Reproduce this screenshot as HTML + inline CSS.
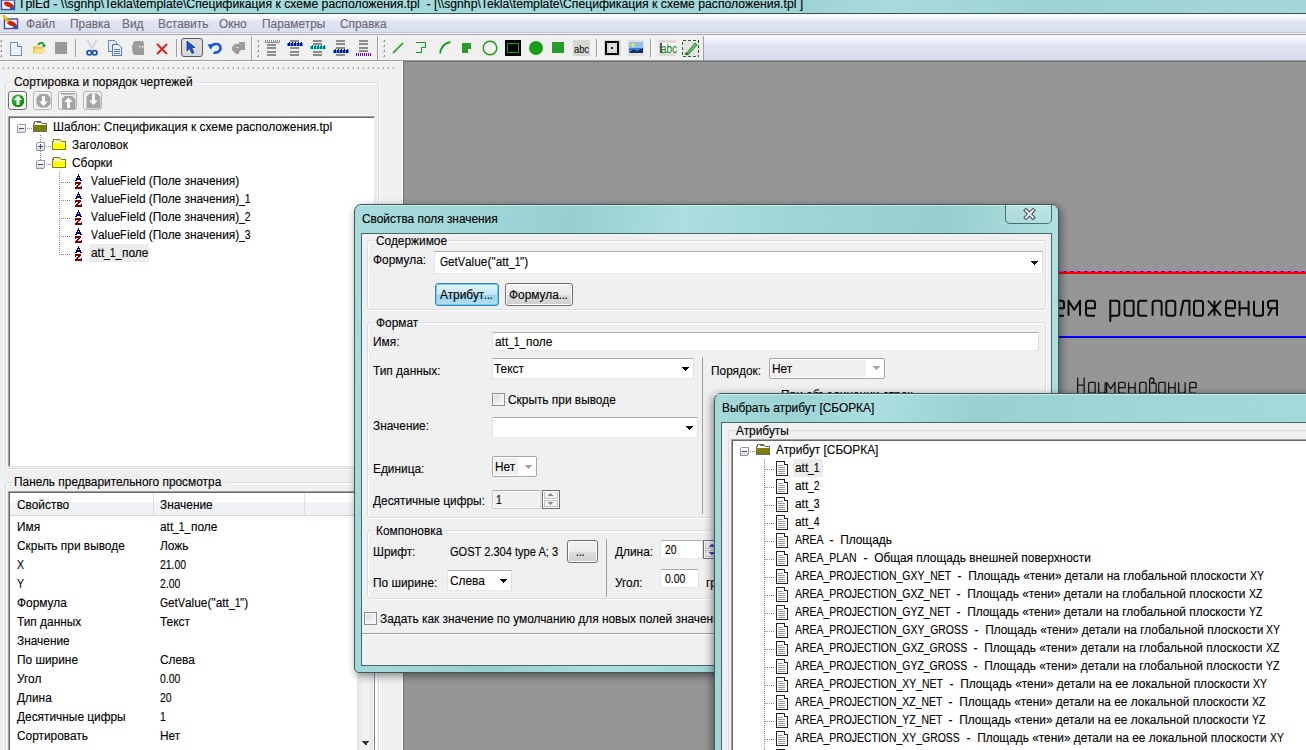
<!DOCTYPE html><html><head><meta charset="utf-8"><style>
html,body{margin:0;padding:0;}
body{width:1306px;height:750px;overflow:hidden;position:relative;background:#f0f0f0;font-family:"Liberation Sans",sans-serif;}
.t{position:absolute;white-space:pre;font-family:"Liberation Sans",sans-serif;-webkit-text-stroke:0.12px currentColor;}
svg{overflow:visible}
</style></head><body>
<div style="position:absolute;left:0px;top:0px;width:1306px;height:13px;background:linear-gradient(90deg,#a6dbdc 0%,#a3d9da 50%,#9fd3d4 62%,#a8dcdc 68%,#9dd2d3 80%,#a3d7d8 100%);"></div>
<div style="position:absolute;left:0px;top:13px;width:1306px;height:1px;background:#3a5555;"></div>
<div class="t" style="left:18px;top:-2px;font-size:12px;line-height:12px;color:#000;transform:scaleX(1.0175);transform-origin:0 0;">TplEd - \\sgnhp\Tekla\template\Спецификация к схеме расположения.tpl  - [\\sgnhp\Tekla\template\Спецификация к схеме расположения.tpl ]</div>
<svg style="position:absolute;left:0px;top:-4px;" width="17" height="16" viewBox="0 0 17 16"><rect x="1.5" y="4" width="13" height="9.5" fill="#fff" stroke="#4848a0" stroke-width="1.4"/><rect x="10" y="9.5" width="4" height="3.5" fill="#1060e0"/><ellipse cx="8.5" cy="8.5" rx="4.8" ry="2.4" transform="rotate(22 8.5 8.5)" fill="#d82010"/></svg>
<div style="position:absolute;left:0px;top:14px;width:1306px;height:18px;background:linear-gradient(180deg,#fbfcfe 0%,#f6f7fb 20%,#dfe4f1 45%,#d9dfee 100%);"></div>
<div style="position:absolute;left:0px;top:32px;width:1306px;height:1px;background:#c4c8d6;"></div>
<div style="position:absolute;left:0px;top:33px;width:1306px;height:1px;background:#f4f5f9;"></div>
<svg style="position:absolute;left:3px;top:15px;" width="17" height="16" viewBox="0 0 17 16"><rect x="1.5" y="4" width="13" height="9.5" fill="#fff" stroke="#4848a0" stroke-width="1.4"/><rect x="10" y="9.5" width="4" height="3.5" fill="#1060e0"/><ellipse cx="8.5" cy="8.5" rx="4.8" ry="2.4" transform="rotate(22 8.5 8.5)" fill="#d82010"/><path d="M0.8 1 L4.5 6.5" stroke="#e8c000" stroke-width="2.6" stroke-linecap="round"/></svg>
<div class="t" style="left:26.00px;top:18px;font-size:12px;line-height:12px;color:#6d6873;transform:scaleX(0.99);transform-origin:0 0;">Файл</div>
<div class="t" style="left:70.00px;top:18px;font-size:12px;line-height:12px;color:#6d6873;transform:scaleX(0.99);transform-origin:0 0;">Правка</div>
<div class="t" style="left:122.00px;top:18px;font-size:12px;line-height:12px;color:#6d6873;transform:scaleX(0.99);transform-origin:0 0;">Вид</div>
<div class="t" style="left:158.00px;top:18px;font-size:12px;line-height:12px;color:#6d6873;transform:scaleX(0.99);transform-origin:0 0;">Вставить</div>
<div class="t" style="left:219.00px;top:18px;font-size:12px;line-height:12px;color:#6d6873;transform:scaleX(0.99);transform-origin:0 0;">Окно</div>
<div class="t" style="left:262.00px;top:18px;font-size:12px;line-height:12px;color:#6d6873;transform:scaleX(0.99);transform-origin:0 0;">Параметры</div>
<div class="t" style="left:340.00px;top:18px;font-size:12px;line-height:12px;color:#6d6873;transform:scaleX(0.99);transform-origin:0 0;">Справка</div>
<div style="position:absolute;left:0px;top:34px;width:1306px;height:26px;background:linear-gradient(180deg,#fcfcfe 0%,#f6f7fb 15%,#dfe3f1 45%,#d6dbec 100%);"></div>
<div style="position:absolute;left:0px;top:34px;width:1306px;height:1px;background:#a4a4a8;"></div>
<div style="position:absolute;left:0px;top:60px;width:1306px;height:1px;background:#a0a0a0;"></div>
<div style="position:absolute;left:0px;top:35px;width:251px;height:25px;background:#f0f0f0;"></div>
<div style="position:absolute;left:253px;top:35px;width:124px;height:25px;background:#f0f0f0;"></div>
<div style="position:absolute;left:379px;top:35px;width:324px;height:25px;background:#f0f0f0;"></div>
<div style="position:absolute;left:251px;top:36px;width:1px;height:24px;background:#a0a0a0;"></div>
<div style="position:absolute;left:252px;top:36px;width:1px;height:24px;background:#ffffff;"></div>
<div style="position:absolute;left:377px;top:36px;width:1px;height:24px;background:#a0a0a0;"></div>
<div style="position:absolute;left:378px;top:36px;width:1px;height:24px;background:#ffffff;"></div>
<div style="position:absolute;left:703px;top:36px;width:1px;height:24px;background:#a0a0a0;"></div>
<svg style="position:absolute;left:0px;top:40px;" width="2" height="2" viewBox="0 0 2 2" shape-rendering="crispEdges"><rect x="1" y="0" width="1" height="2" fill="#909090"/><rect x="0" y="1" width="1" height="1" fill="#b0b0b0"/></svg>
<svg style="position:absolute;left:0px;top:45px;" width="2" height="2" viewBox="0 0 2 2" shape-rendering="crispEdges"><rect x="1" y="0" width="1" height="2" fill="#909090"/><rect x="0" y="1" width="1" height="1" fill="#b0b0b0"/></svg>
<svg style="position:absolute;left:0px;top:50px;" width="2" height="2" viewBox="0 0 2 2" shape-rendering="crispEdges"><rect x="1" y="0" width="1" height="2" fill="#909090"/><rect x="0" y="1" width="1" height="1" fill="#b0b0b0"/></svg>
<svg style="position:absolute;left:0px;top:55px;" width="2" height="2" viewBox="0 0 2 2" shape-rendering="crispEdges"><rect x="1" y="0" width="1" height="2" fill="#909090"/><rect x="0" y="1" width="1" height="1" fill="#b0b0b0"/></svg>
<svg style="position:absolute;left:257px;top:40px;" width="2" height="2" viewBox="0 0 2 2" shape-rendering="crispEdges"><rect x="1" y="0" width="1" height="2" fill="#909090"/><rect x="0" y="1" width="1" height="1" fill="#b0b0b0"/></svg>
<svg style="position:absolute;left:257px;top:45px;" width="2" height="2" viewBox="0 0 2 2" shape-rendering="crispEdges"><rect x="1" y="0" width="1" height="2" fill="#909090"/><rect x="0" y="1" width="1" height="1" fill="#b0b0b0"/></svg>
<svg style="position:absolute;left:257px;top:50px;" width="2" height="2" viewBox="0 0 2 2" shape-rendering="crispEdges"><rect x="1" y="0" width="1" height="2" fill="#909090"/><rect x="0" y="1" width="1" height="1" fill="#b0b0b0"/></svg>
<svg style="position:absolute;left:257px;top:55px;" width="2" height="2" viewBox="0 0 2 2" shape-rendering="crispEdges"><rect x="1" y="0" width="1" height="2" fill="#909090"/><rect x="0" y="1" width="1" height="1" fill="#b0b0b0"/></svg>
<svg style="position:absolute;left:383px;top:40px;" width="2" height="2" viewBox="0 0 2 2" shape-rendering="crispEdges"><rect x="1" y="0" width="1" height="2" fill="#909090"/><rect x="0" y="1" width="1" height="1" fill="#b0b0b0"/></svg>
<svg style="position:absolute;left:383px;top:45px;" width="2" height="2" viewBox="0 0 2 2" shape-rendering="crispEdges"><rect x="1" y="0" width="1" height="2" fill="#909090"/><rect x="0" y="1" width="1" height="1" fill="#b0b0b0"/></svg>
<svg style="position:absolute;left:383px;top:50px;" width="2" height="2" viewBox="0 0 2 2" shape-rendering="crispEdges"><rect x="1" y="0" width="1" height="2" fill="#909090"/><rect x="0" y="1" width="1" height="1" fill="#b0b0b0"/></svg>
<svg style="position:absolute;left:383px;top:55px;" width="2" height="2" viewBox="0 0 2 2" shape-rendering="crispEdges"><rect x="1" y="0" width="1" height="2" fill="#909090"/><rect x="0" y="1" width="1" height="1" fill="#b0b0b0"/></svg>
<div style="position:absolute;left:75px;top:39px;width:1px;height:18px;background:#9a9a9a;"></div>
<div style="position:absolute;left:76px;top:39px;width:1px;height:18px;background:#ffffff;"></div>
<div style="position:absolute;left:176px;top:39px;width:1px;height:18px;background:#9a9a9a;"></div>
<div style="position:absolute;left:177px;top:39px;width:1px;height:18px;background:#ffffff;"></div>
<div style="position:absolute;left:596px;top:39px;width:1px;height:18px;background:#9a9a9a;"></div>
<div style="position:absolute;left:597px;top:39px;width:1px;height:18px;background:#ffffff;"></div>
<div style="position:absolute;left:650px;top:39px;width:1px;height:18px;background:#9a9a9a;"></div>
<div style="position:absolute;left:651px;top:39px;width:1px;height:18px;background:#ffffff;"></div>
<svg style="position:absolute;left:10px;top:42px;" width="12" height="14" viewBox="0 0 12 14" shape-rendering="crispEdges"><path d="M0.5 0.5 H7.5 L11.5 4.5 V13.5 H0.5Z" fill="#e8f0fc" stroke="#7a8cb4"/><path d="M7.5 0.5 V4.5 H11.5" fill="#c8d8f0" stroke="#7a8cb4"/></svg>
<svg style="position:absolute;left:32px;top:41px;" width="15" height="14" viewBox="0 0 15 14"><path d="M1 5 H5 L6 6 H11 V13 H1Z" fill="#e9c55a"/><path d="M1 13 L4 8 H14 L11 13Z" fill="#f7df8c"/><path d="M6 4 C8 1 11 1 12 4" stroke="#20a020" stroke-width="2" fill="none"/><path d="M10 4 H14 L12 7Z" fill="#20a020"/></svg>
<svg style="position:absolute;left:55px;top:42px;" width="12" height="12" viewBox="0 0 12 12" shape-rendering="crispEdges"><rect x="0" y="0" width="12" height="12" rx="1" fill="#9a9a9a"/></svg>
<svg style="position:absolute;left:86px;top:40px;" width="12" height="16" viewBox="0 0 12 16"><path d="M1.5 0 L7 10.5 M10.5 0 L5 10.5" stroke="#b0b8c8" stroke-width="1.6"/><path d="M1.5 0 L7 10.5 M10.5 0 L5 10.5" stroke="#fff" stroke-width="0.6"/><ellipse cx="3.3" cy="12.8" rx="2.3" ry="2.2" fill="none" stroke="#1e50c0" stroke-width="1.7"/><ellipse cx="8.7" cy="12.8" rx="2.3" ry="2.2" fill="none" stroke="#1e50c0" stroke-width="1.7"/></svg>
<svg style="position:absolute;left:108px;top:40px;" width="14" height="16" viewBox="0 0 14 16" shape-rendering="crispEdges"><path d="M0.5 0.5 H6.5 L8.5 2.5 V11.5 H0.5Z" fill="#e4ecf8" stroke="#6a86c0"/><path d="M4.5 4.5 H10.5 L13.5 7.5 V15.5 H4.5Z" fill="#eef3fb" stroke="#5577bb"/><path d="M6 9.5H12M6 11.5H12M6 13.5H12" stroke="#5577bb"/></svg>
<svg style="position:absolute;left:131px;top:40px;" width="14" height="16" viewBox="0 0 14 16"><path d="M2 4 Q2 1 5 1 H10 Q13 1 13 4 V15 H4 Q2 15 1.5 12 L1 6Z" fill="#9c9c9c"/><rect x="8" y="6" width="1.5" height="1.5" fill="#fff"/><rect x="11" y="6" width="1.5" height="1.5" fill="#fff"/></svg>
<svg style="position:absolute;left:156px;top:43px;" width="12" height="12" viewBox="0 0 12 12"><path d="M1 1 L11 11 M11 1 L1 11" stroke="#e02010" stroke-width="1.8"/></svg>
<div style="position:absolute;left:181px;top:38px;width:22px;height:19px;border:1px solid #5a5a5a;border-radius:3px;background:linear-gradient(180deg,#e0e0e0,#d6d6d6);box-sizing:border-box;"></div>
<svg style="position:absolute;left:186px;top:41px;" width="12" height="14" viewBox="0 0 12 14"><path d="M1 0 L1 10 L3.5 7.5 L6 12.5 L8 11.5 L5.5 6.5 L9 6.5Z" fill="#1a4fd0" stroke="#0d2f80" stroke-width="0.7"/></svg>
<svg style="position:absolute;left:207px;top:41px;" width="16" height="14" viewBox="0 0 16 14"><path d="M3.5 6.5 C5 2 13 1.5 13.5 6.5 C14 10.5 9 12.5 6.5 11.5" stroke="#1858d0" stroke-width="2.6" fill="none"/><path d="M0.5 3.5 L6 3 L4 9Z" fill="#1858d0"/></svg>
<svg style="position:absolute;left:230px;top:41px;" width="16" height="14" viewBox="0 0 16 14"><path d="M9 1 H15 V9 H11 L9 11 V13 H6 L2 9 V6 L5 3 H9Z" fill="#9c9c9c"/><path d="M5 7 H9 L8 6Z" fill="#fff"/></svg>
<svg style="position:absolute;left:265px;top:39px;" width="16" height="18" viewBox="0 0 16 18" shape-rendering="crispEdges"><rect x="0" y="3" width="14" height="1" fill="#8c8c8c"/><rect x="0" y="1" width="1" height="2" fill="#8c8c8c"/><rect x="2" y="1" width="1" height="2" fill="#8c8c8c"/><rect x="4" y="1" width="1" height="2" fill="#8c8c8c"/><rect x="6" y="1" width="1" height="2" fill="#8c8c8c"/><rect x="8" y="1" width="1" height="2" fill="#8c8c8c"/><rect x="10" y="1" width="1" height="2" fill="#8c8c8c"/><rect x="12" y="1" width="1" height="2" fill="#8c8c8c"/><rect x="14" y="1" width="1" height="2" fill="#8c8c8c"/><rect x="2" y="5" width="9" height="2" fill="#8c8c8c"/><rect x="2" y="8" width="9" height="2" fill="#8c8c8c"/><rect x="2" y="12" width="9" height="2" fill="#8c8c8c"/><rect x="2" y="15" width="9" height="2" fill="#8c8c8c"/></svg>
<svg style="position:absolute;left:287px;top:39px;" width="16" height="18" viewBox="0 0 16 18" shape-rendering="crispEdges"><rect x="3" y="1" width="9" height="2" fill="#8c8c8c"/><rect x="3" y="8" width="9" height="2" fill="#8c8c8c"/><rect x="3" y="12" width="9" height="2" fill="#8c8c8c"/><rect x="3" y="15" width="9" height="2" fill="#8c8c8c"/><rect x="0" y="4" width="16" height="3" fill="#10b8ff"/><rect x="1" y="4" width="2" height="3" fill="#000090"/><rect x="1.5" y="3" width="1" height="1" fill="#000090"/><rect x="4" y="4" width="2" height="3" fill="#000090"/><rect x="4.5" y="3" width="1" height="1" fill="#000090"/><rect x="7" y="4" width="2" height="3" fill="#000090"/><rect x="7.5" y="3" width="1" height="1" fill="#000090"/><rect x="10" y="4" width="2" height="3" fill="#000090"/><rect x="10.5" y="3" width="1" height="1" fill="#000090"/><rect x="13" y="4" width="2" height="3" fill="#000090"/><rect x="13.5" y="3" width="1" height="1" fill="#000090"/></svg>
<svg style="position:absolute;left:310px;top:39px;" width="16" height="18" viewBox="0 0 16 18" shape-rendering="crispEdges"><rect x="3" y="1" width="9" height="2" fill="#8c8c8c"/><rect x="3" y="4" width="9" height="2" fill="#8c8c8c"/><rect x="3" y="12" width="9" height="2" fill="#8c8c8c"/><rect x="3" y="15" width="9" height="2" fill="#8c8c8c"/><rect x="0" y="7" width="16" height="3" fill="#00ffff"/><rect x="1" y="7" width="2" height="3" fill="#007070"/><rect x="1.5" y="6" width="1" height="1" fill="#007070"/><rect x="4" y="7" width="2" height="3" fill="#007070"/><rect x="4.5" y="6" width="1" height="1" fill="#007070"/><rect x="7" y="7" width="2" height="3" fill="#007070"/><rect x="7.5" y="6" width="1" height="1" fill="#007070"/><rect x="10" y="7" width="2" height="3" fill="#007070"/><rect x="10.5" y="6" width="1" height="1" fill="#007070"/><rect x="13" y="7" width="2" height="3" fill="#007070"/><rect x="13.5" y="6" width="1" height="1" fill="#007070"/></svg>
<svg style="position:absolute;left:333px;top:39px;" width="16" height="18" viewBox="0 0 16 18" shape-rendering="crispEdges"><rect x="3" y="1" width="9" height="2" fill="#8c8c8c"/><rect x="3" y="4" width="9" height="2" fill="#8c8c8c"/><rect x="3" y="8" width="9" height="2" fill="#8c8c8c"/><rect x="3" y="15" width="9" height="2" fill="#8c8c8c"/><rect x="0" y="11" width="16" height="3" fill="#10b8ff"/><rect x="1" y="11" width="2" height="3" fill="#000090"/><rect x="1.5" y="10" width="1" height="1" fill="#000090"/><rect x="4" y="11" width="2" height="3" fill="#000090"/><rect x="4.5" y="10" width="1" height="1" fill="#000090"/><rect x="7" y="11" width="2" height="3" fill="#000090"/><rect x="7.5" y="10" width="1" height="1" fill="#000090"/><rect x="10" y="11" width="2" height="3" fill="#000090"/><rect x="10.5" y="10" width="1" height="1" fill="#000090"/><rect x="13" y="11" width="2" height="3" fill="#000090"/><rect x="13.5" y="10" width="1" height="1" fill="#000090"/></svg>
<svg style="position:absolute;left:356px;top:39px;" width="16" height="18" viewBox="0 0 16 18" shape-rendering="crispEdges"><rect x="3" y="1" width="9" height="2" fill="#8c8c8c"/><rect x="3" y="4" width="9" height="2" fill="#8c8c8c"/><rect x="3" y="8" width="9" height="2" fill="#8c8c8c"/><rect x="3" y="11" width="9" height="2" fill="#8c8c8c"/><rect x="0" y="14" width="1" height="3" fill="#7000e0"/><rect x="2" y="14" width="1" height="3" fill="#7000e0"/><rect x="4" y="14" width="1" height="3" fill="#7000e0"/><rect x="6" y="14" width="1" height="3" fill="#7000e0"/><rect x="8" y="14" width="1" height="3" fill="#7000e0"/><rect x="10" y="14" width="1" height="3" fill="#7000e0"/><rect x="12" y="14" width="1" height="3" fill="#7000e0"/><rect x="14" y="14" width="1" height="3" fill="#7000e0"/></svg>
<svg style="position:absolute;left:392px;top:42px;" width="12" height="12" viewBox="0 0 12 12"><path d="M1 11 L11 1" stroke="#17a017" stroke-width="1.6"/></svg>
<svg style="position:absolute;left:416px;top:42px;" width="10" height="11" viewBox="0 0 10 11" shape-rendering="crispEdges"><path d="M0 0.5 H9.5 V5.5 H5.5 V10.5 H0" stroke="#17a017" fill="none"/></svg>
<svg style="position:absolute;left:439px;top:41px;" width="12" height="13" viewBox="0 0 12 13"><path d="M1 12.5 C2 6 6 2 11.5 1" stroke="#17a017" stroke-width="1.8" fill="none"/></svg>
<svg style="position:absolute;left:462px;top:43px;" width="10" height="10" viewBox="0 0 10 10" shape-rendering="crispEdges"><path d="M0 0 H9 V6 H6 V10 H0Z" fill="#2a9a2a"/></svg>
<svg style="position:absolute;left:482px;top:40px;" width="16" height="16" viewBox="0 0 16 16"><circle cx="8" cy="8" r="6.8" fill="none" stroke="#17a017" stroke-width="1.4"/></svg>
<svg style="position:absolute;left:505px;top:40px;" width="16" height="16" viewBox="0 0 16 16" shape-rendering="crispEdges"><rect x="0" y="0" width="16" height="16" fill="#000"/><rect x="2.5" y="3.5" width="11" height="9" fill="none" stroke="#17a017"/></svg>
<svg style="position:absolute;left:528px;top:40px;" width="16" height="16" viewBox="0 0 16 16"><circle cx="8" cy="8" r="7" fill="#17a017"/></svg>
<svg style="position:absolute;left:552px;top:42px;" width="12" height="11" viewBox="0 0 12 11" shape-rendering="crispEdges"><rect x="0" y="0" width="12" height="11" fill="#2a9a2a"/></svg>
<div style="position:absolute;left:573px;top:40px;width:17px;height:16px;background:#d8d6d0;"></div>
<div class="t" style="left:574px;top:44px;font-size:11px;line-height:11px;color:#111;transform:scaleX(0.8451);transform-origin:0 0;">abc</div>
<svg style="position:absolute;left:604px;top:40px;" width="17" height="16" viewBox="0 0 17 16" shape-rendering="crispEdges"><rect x="0" y="0" width="17" height="16" fill="#dcdad4"/><rect x="2" y="2" width="12" height="12" fill="none" stroke="#000" stroke-width="1.5"/><circle cx="8" cy="8" r="1.5" fill="#222"/></svg>
<svg style="position:absolute;left:628px;top:40px;" width="16" height="16" viewBox="0 0 16 16" shape-rendering="crispEdges"><rect x="0" y="0" width="16" height="16" fill="#e0e0e0"/><rect x="1" y="2" width="14" height="11" fill="#3a7ad0"/><rect x="1" y="2" width="14" height="6" fill="#8ec0f0"/><circle cx="5" cy="5" r="1.8" fill="#f8e040"/><path d="M1 13 L5 9 L9 11 L15 8 V13Z" fill="#103060"/></svg>
<svg style="position:absolute;left:659px;top:40px;" width="17" height="16" viewBox="0 0 17 16" shape-rendering="crispEdges"><rect x="0" y="0" width="17" height="16" fill="#dcdad4"/><rect x="1" y="3" width="16" height="10" fill="#fff"/><rect x="1" y="3" width="2" height="10" fill="#555"/></svg>
<div class="t" style="left:661px;top:43px;font-size:12px;line-height:12px;color:#1a7a1a;transform:scaleX(0.8271);transform-origin:0 0;clip-path:inset(0 0 0 0);">abc</div>
<svg style="position:absolute;left:682px;top:40px;" width="17" height="17" viewBox="0 0 17 17" shape-rendering="crispEdges"><rect x="0.5" y="0.5" width="16" height="16" fill="#e4e4e4" stroke="#1a6a1a" stroke-dasharray="3 2"/></svg>
<svg style="position:absolute;left:682px;top:40px;" width="17" height="17" viewBox="0 0 17 17"><path d="M4 14 L13 3 L15 5 L6 15Z" fill="#5ac85a" stroke="#1a6a1a" stroke-width="0.8"/><path d="M3 15 L4 12 L6 14Z" fill="#333"/></svg>
<div style="position:absolute;left:0px;top:61px;width:403px;height:689px;background:#f0f0f0;"></div>
<div style="position:absolute;left:0px;top:61px;width:403px;height:1px;background:#ffffff;"></div>
<div style="position:absolute;left:402px;top:61px;width:1px;height:689px;background:#ffffff;"></div>
<svg style="position:absolute;left:2px;top:67px;" width="2" height="2" viewBox="0 0 2 2" shape-rendering="crispEdges"><rect x="1" y="0" width="1" height="2" fill="#a8a8a8"/><rect x="0" y="1" width="1" height="1" fill="#c8c8c8"/></svg>
<svg style="position:absolute;left:7px;top:67px;" width="2" height="2" viewBox="0 0 2 2" shape-rendering="crispEdges"><rect x="1" y="0" width="1" height="2" fill="#a8a8a8"/><rect x="0" y="1" width="1" height="1" fill="#c8c8c8"/></svg>
<svg style="position:absolute;left:12px;top:67px;" width="2" height="2" viewBox="0 0 2 2" shape-rendering="crispEdges"><rect x="1" y="0" width="1" height="2" fill="#a8a8a8"/><rect x="0" y="1" width="1" height="1" fill="#c8c8c8"/></svg>
<svg style="position:absolute;left:17px;top:67px;" width="2" height="2" viewBox="0 0 2 2" shape-rendering="crispEdges"><rect x="1" y="0" width="1" height="2" fill="#a8a8a8"/><rect x="0" y="1" width="1" height="1" fill="#c8c8c8"/></svg>
<svg style="position:absolute;left:22px;top:67px;" width="2" height="2" viewBox="0 0 2 2" shape-rendering="crispEdges"><rect x="1" y="0" width="1" height="2" fill="#a8a8a8"/><rect x="0" y="1" width="1" height="1" fill="#c8c8c8"/></svg>
<svg style="position:absolute;left:27px;top:67px;" width="2" height="2" viewBox="0 0 2 2" shape-rendering="crispEdges"><rect x="1" y="0" width="1" height="2" fill="#a8a8a8"/><rect x="0" y="1" width="1" height="1" fill="#c8c8c8"/></svg>
<svg style="position:absolute;left:32px;top:67px;" width="2" height="2" viewBox="0 0 2 2" shape-rendering="crispEdges"><rect x="1" y="0" width="1" height="2" fill="#a8a8a8"/><rect x="0" y="1" width="1" height="1" fill="#c8c8c8"/></svg>
<svg style="position:absolute;left:37px;top:67px;" width="2" height="2" viewBox="0 0 2 2" shape-rendering="crispEdges"><rect x="1" y="0" width="1" height="2" fill="#a8a8a8"/><rect x="0" y="1" width="1" height="1" fill="#c8c8c8"/></svg>
<svg style="position:absolute;left:42px;top:67px;" width="2" height="2" viewBox="0 0 2 2" shape-rendering="crispEdges"><rect x="1" y="0" width="1" height="2" fill="#a8a8a8"/><rect x="0" y="1" width="1" height="1" fill="#c8c8c8"/></svg>
<svg style="position:absolute;left:47px;top:67px;" width="2" height="2" viewBox="0 0 2 2" shape-rendering="crispEdges"><rect x="1" y="0" width="1" height="2" fill="#a8a8a8"/><rect x="0" y="1" width="1" height="1" fill="#c8c8c8"/></svg>
<svg style="position:absolute;left:52px;top:67px;" width="2" height="2" viewBox="0 0 2 2" shape-rendering="crispEdges"><rect x="1" y="0" width="1" height="2" fill="#a8a8a8"/><rect x="0" y="1" width="1" height="1" fill="#c8c8c8"/></svg>
<svg style="position:absolute;left:57px;top:67px;" width="2" height="2" viewBox="0 0 2 2" shape-rendering="crispEdges"><rect x="1" y="0" width="1" height="2" fill="#a8a8a8"/><rect x="0" y="1" width="1" height="1" fill="#c8c8c8"/></svg>
<svg style="position:absolute;left:62px;top:67px;" width="2" height="2" viewBox="0 0 2 2" shape-rendering="crispEdges"><rect x="1" y="0" width="1" height="2" fill="#a8a8a8"/><rect x="0" y="1" width="1" height="1" fill="#c8c8c8"/></svg>
<svg style="position:absolute;left:67px;top:67px;" width="2" height="2" viewBox="0 0 2 2" shape-rendering="crispEdges"><rect x="1" y="0" width="1" height="2" fill="#a8a8a8"/><rect x="0" y="1" width="1" height="1" fill="#c8c8c8"/></svg>
<svg style="position:absolute;left:72px;top:67px;" width="2" height="2" viewBox="0 0 2 2" shape-rendering="crispEdges"><rect x="1" y="0" width="1" height="2" fill="#a8a8a8"/><rect x="0" y="1" width="1" height="1" fill="#c8c8c8"/></svg>
<svg style="position:absolute;left:77px;top:67px;" width="2" height="2" viewBox="0 0 2 2" shape-rendering="crispEdges"><rect x="1" y="0" width="1" height="2" fill="#a8a8a8"/><rect x="0" y="1" width="1" height="1" fill="#c8c8c8"/></svg>
<svg style="position:absolute;left:82px;top:67px;" width="2" height="2" viewBox="0 0 2 2" shape-rendering="crispEdges"><rect x="1" y="0" width="1" height="2" fill="#a8a8a8"/><rect x="0" y="1" width="1" height="1" fill="#c8c8c8"/></svg>
<svg style="position:absolute;left:87px;top:67px;" width="2" height="2" viewBox="0 0 2 2" shape-rendering="crispEdges"><rect x="1" y="0" width="1" height="2" fill="#a8a8a8"/><rect x="0" y="1" width="1" height="1" fill="#c8c8c8"/></svg>
<svg style="position:absolute;left:92px;top:67px;" width="2" height="2" viewBox="0 0 2 2" shape-rendering="crispEdges"><rect x="1" y="0" width="1" height="2" fill="#a8a8a8"/><rect x="0" y="1" width="1" height="1" fill="#c8c8c8"/></svg>
<svg style="position:absolute;left:97px;top:67px;" width="2" height="2" viewBox="0 0 2 2" shape-rendering="crispEdges"><rect x="1" y="0" width="1" height="2" fill="#a8a8a8"/><rect x="0" y="1" width="1" height="1" fill="#c8c8c8"/></svg>
<svg style="position:absolute;left:102px;top:67px;" width="2" height="2" viewBox="0 0 2 2" shape-rendering="crispEdges"><rect x="1" y="0" width="1" height="2" fill="#a8a8a8"/><rect x="0" y="1" width="1" height="1" fill="#c8c8c8"/></svg>
<svg style="position:absolute;left:107px;top:67px;" width="2" height="2" viewBox="0 0 2 2" shape-rendering="crispEdges"><rect x="1" y="0" width="1" height="2" fill="#a8a8a8"/><rect x="0" y="1" width="1" height="1" fill="#c8c8c8"/></svg>
<svg style="position:absolute;left:112px;top:67px;" width="2" height="2" viewBox="0 0 2 2" shape-rendering="crispEdges"><rect x="1" y="0" width="1" height="2" fill="#a8a8a8"/><rect x="0" y="1" width="1" height="1" fill="#c8c8c8"/></svg>
<svg style="position:absolute;left:117px;top:67px;" width="2" height="2" viewBox="0 0 2 2" shape-rendering="crispEdges"><rect x="1" y="0" width="1" height="2" fill="#a8a8a8"/><rect x="0" y="1" width="1" height="1" fill="#c8c8c8"/></svg>
<svg style="position:absolute;left:122px;top:67px;" width="2" height="2" viewBox="0 0 2 2" shape-rendering="crispEdges"><rect x="1" y="0" width="1" height="2" fill="#a8a8a8"/><rect x="0" y="1" width="1" height="1" fill="#c8c8c8"/></svg>
<svg style="position:absolute;left:127px;top:67px;" width="2" height="2" viewBox="0 0 2 2" shape-rendering="crispEdges"><rect x="1" y="0" width="1" height="2" fill="#a8a8a8"/><rect x="0" y="1" width="1" height="1" fill="#c8c8c8"/></svg>
<svg style="position:absolute;left:132px;top:67px;" width="2" height="2" viewBox="0 0 2 2" shape-rendering="crispEdges"><rect x="1" y="0" width="1" height="2" fill="#a8a8a8"/><rect x="0" y="1" width="1" height="1" fill="#c8c8c8"/></svg>
<svg style="position:absolute;left:137px;top:67px;" width="2" height="2" viewBox="0 0 2 2" shape-rendering="crispEdges"><rect x="1" y="0" width="1" height="2" fill="#a8a8a8"/><rect x="0" y="1" width="1" height="1" fill="#c8c8c8"/></svg>
<svg style="position:absolute;left:142px;top:67px;" width="2" height="2" viewBox="0 0 2 2" shape-rendering="crispEdges"><rect x="1" y="0" width="1" height="2" fill="#a8a8a8"/><rect x="0" y="1" width="1" height="1" fill="#c8c8c8"/></svg>
<svg style="position:absolute;left:147px;top:67px;" width="2" height="2" viewBox="0 0 2 2" shape-rendering="crispEdges"><rect x="1" y="0" width="1" height="2" fill="#a8a8a8"/><rect x="0" y="1" width="1" height="1" fill="#c8c8c8"/></svg>
<svg style="position:absolute;left:152px;top:67px;" width="2" height="2" viewBox="0 0 2 2" shape-rendering="crispEdges"><rect x="1" y="0" width="1" height="2" fill="#a8a8a8"/><rect x="0" y="1" width="1" height="1" fill="#c8c8c8"/></svg>
<svg style="position:absolute;left:157px;top:67px;" width="2" height="2" viewBox="0 0 2 2" shape-rendering="crispEdges"><rect x="1" y="0" width="1" height="2" fill="#a8a8a8"/><rect x="0" y="1" width="1" height="1" fill="#c8c8c8"/></svg>
<svg style="position:absolute;left:162px;top:67px;" width="2" height="2" viewBox="0 0 2 2" shape-rendering="crispEdges"><rect x="1" y="0" width="1" height="2" fill="#a8a8a8"/><rect x="0" y="1" width="1" height="1" fill="#c8c8c8"/></svg>
<svg style="position:absolute;left:167px;top:67px;" width="2" height="2" viewBox="0 0 2 2" shape-rendering="crispEdges"><rect x="1" y="0" width="1" height="2" fill="#a8a8a8"/><rect x="0" y="1" width="1" height="1" fill="#c8c8c8"/></svg>
<svg style="position:absolute;left:172px;top:67px;" width="2" height="2" viewBox="0 0 2 2" shape-rendering="crispEdges"><rect x="1" y="0" width="1" height="2" fill="#a8a8a8"/><rect x="0" y="1" width="1" height="1" fill="#c8c8c8"/></svg>
<svg style="position:absolute;left:177px;top:67px;" width="2" height="2" viewBox="0 0 2 2" shape-rendering="crispEdges"><rect x="1" y="0" width="1" height="2" fill="#a8a8a8"/><rect x="0" y="1" width="1" height="1" fill="#c8c8c8"/></svg>
<svg style="position:absolute;left:182px;top:67px;" width="2" height="2" viewBox="0 0 2 2" shape-rendering="crispEdges"><rect x="1" y="0" width="1" height="2" fill="#a8a8a8"/><rect x="0" y="1" width="1" height="1" fill="#c8c8c8"/></svg>
<svg style="position:absolute;left:187px;top:67px;" width="2" height="2" viewBox="0 0 2 2" shape-rendering="crispEdges"><rect x="1" y="0" width="1" height="2" fill="#a8a8a8"/><rect x="0" y="1" width="1" height="1" fill="#c8c8c8"/></svg>
<svg style="position:absolute;left:192px;top:67px;" width="2" height="2" viewBox="0 0 2 2" shape-rendering="crispEdges"><rect x="1" y="0" width="1" height="2" fill="#a8a8a8"/><rect x="0" y="1" width="1" height="1" fill="#c8c8c8"/></svg>
<svg style="position:absolute;left:197px;top:67px;" width="2" height="2" viewBox="0 0 2 2" shape-rendering="crispEdges"><rect x="1" y="0" width="1" height="2" fill="#a8a8a8"/><rect x="0" y="1" width="1" height="1" fill="#c8c8c8"/></svg>
<svg style="position:absolute;left:202px;top:67px;" width="2" height="2" viewBox="0 0 2 2" shape-rendering="crispEdges"><rect x="1" y="0" width="1" height="2" fill="#a8a8a8"/><rect x="0" y="1" width="1" height="1" fill="#c8c8c8"/></svg>
<svg style="position:absolute;left:207px;top:67px;" width="2" height="2" viewBox="0 0 2 2" shape-rendering="crispEdges"><rect x="1" y="0" width="1" height="2" fill="#a8a8a8"/><rect x="0" y="1" width="1" height="1" fill="#c8c8c8"/></svg>
<svg style="position:absolute;left:212px;top:67px;" width="2" height="2" viewBox="0 0 2 2" shape-rendering="crispEdges"><rect x="1" y="0" width="1" height="2" fill="#a8a8a8"/><rect x="0" y="1" width="1" height="1" fill="#c8c8c8"/></svg>
<svg style="position:absolute;left:217px;top:67px;" width="2" height="2" viewBox="0 0 2 2" shape-rendering="crispEdges"><rect x="1" y="0" width="1" height="2" fill="#a8a8a8"/><rect x="0" y="1" width="1" height="1" fill="#c8c8c8"/></svg>
<svg style="position:absolute;left:222px;top:67px;" width="2" height="2" viewBox="0 0 2 2" shape-rendering="crispEdges"><rect x="1" y="0" width="1" height="2" fill="#a8a8a8"/><rect x="0" y="1" width="1" height="1" fill="#c8c8c8"/></svg>
<svg style="position:absolute;left:227px;top:67px;" width="2" height="2" viewBox="0 0 2 2" shape-rendering="crispEdges"><rect x="1" y="0" width="1" height="2" fill="#a8a8a8"/><rect x="0" y="1" width="1" height="1" fill="#c8c8c8"/></svg>
<svg style="position:absolute;left:232px;top:67px;" width="2" height="2" viewBox="0 0 2 2" shape-rendering="crispEdges"><rect x="1" y="0" width="1" height="2" fill="#a8a8a8"/><rect x="0" y="1" width="1" height="1" fill="#c8c8c8"/></svg>
<svg style="position:absolute;left:237px;top:67px;" width="2" height="2" viewBox="0 0 2 2" shape-rendering="crispEdges"><rect x="1" y="0" width="1" height="2" fill="#a8a8a8"/><rect x="0" y="1" width="1" height="1" fill="#c8c8c8"/></svg>
<svg style="position:absolute;left:242px;top:67px;" width="2" height="2" viewBox="0 0 2 2" shape-rendering="crispEdges"><rect x="1" y="0" width="1" height="2" fill="#a8a8a8"/><rect x="0" y="1" width="1" height="1" fill="#c8c8c8"/></svg>
<svg style="position:absolute;left:247px;top:67px;" width="2" height="2" viewBox="0 0 2 2" shape-rendering="crispEdges"><rect x="1" y="0" width="1" height="2" fill="#a8a8a8"/><rect x="0" y="1" width="1" height="1" fill="#c8c8c8"/></svg>
<svg style="position:absolute;left:252px;top:67px;" width="2" height="2" viewBox="0 0 2 2" shape-rendering="crispEdges"><rect x="1" y="0" width="1" height="2" fill="#a8a8a8"/><rect x="0" y="1" width="1" height="1" fill="#c8c8c8"/></svg>
<svg style="position:absolute;left:257px;top:67px;" width="2" height="2" viewBox="0 0 2 2" shape-rendering="crispEdges"><rect x="1" y="0" width="1" height="2" fill="#a8a8a8"/><rect x="0" y="1" width="1" height="1" fill="#c8c8c8"/></svg>
<svg style="position:absolute;left:262px;top:67px;" width="2" height="2" viewBox="0 0 2 2" shape-rendering="crispEdges"><rect x="1" y="0" width="1" height="2" fill="#a8a8a8"/><rect x="0" y="1" width="1" height="1" fill="#c8c8c8"/></svg>
<svg style="position:absolute;left:267px;top:67px;" width="2" height="2" viewBox="0 0 2 2" shape-rendering="crispEdges"><rect x="1" y="0" width="1" height="2" fill="#a8a8a8"/><rect x="0" y="1" width="1" height="1" fill="#c8c8c8"/></svg>
<svg style="position:absolute;left:272px;top:67px;" width="2" height="2" viewBox="0 0 2 2" shape-rendering="crispEdges"><rect x="1" y="0" width="1" height="2" fill="#a8a8a8"/><rect x="0" y="1" width="1" height="1" fill="#c8c8c8"/></svg>
<svg style="position:absolute;left:277px;top:67px;" width="2" height="2" viewBox="0 0 2 2" shape-rendering="crispEdges"><rect x="1" y="0" width="1" height="2" fill="#a8a8a8"/><rect x="0" y="1" width="1" height="1" fill="#c8c8c8"/></svg>
<svg style="position:absolute;left:282px;top:67px;" width="2" height="2" viewBox="0 0 2 2" shape-rendering="crispEdges"><rect x="1" y="0" width="1" height="2" fill="#a8a8a8"/><rect x="0" y="1" width="1" height="1" fill="#c8c8c8"/></svg>
<svg style="position:absolute;left:287px;top:67px;" width="2" height="2" viewBox="0 0 2 2" shape-rendering="crispEdges"><rect x="1" y="0" width="1" height="2" fill="#a8a8a8"/><rect x="0" y="1" width="1" height="1" fill="#c8c8c8"/></svg>
<svg style="position:absolute;left:292px;top:67px;" width="2" height="2" viewBox="0 0 2 2" shape-rendering="crispEdges"><rect x="1" y="0" width="1" height="2" fill="#a8a8a8"/><rect x="0" y="1" width="1" height="1" fill="#c8c8c8"/></svg>
<svg style="position:absolute;left:297px;top:67px;" width="2" height="2" viewBox="0 0 2 2" shape-rendering="crispEdges"><rect x="1" y="0" width="1" height="2" fill="#a8a8a8"/><rect x="0" y="1" width="1" height="1" fill="#c8c8c8"/></svg>
<svg style="position:absolute;left:302px;top:67px;" width="2" height="2" viewBox="0 0 2 2" shape-rendering="crispEdges"><rect x="1" y="0" width="1" height="2" fill="#a8a8a8"/><rect x="0" y="1" width="1" height="1" fill="#c8c8c8"/></svg>
<svg style="position:absolute;left:307px;top:67px;" width="2" height="2" viewBox="0 0 2 2" shape-rendering="crispEdges"><rect x="1" y="0" width="1" height="2" fill="#a8a8a8"/><rect x="0" y="1" width="1" height="1" fill="#c8c8c8"/></svg>
<svg style="position:absolute;left:312px;top:67px;" width="2" height="2" viewBox="0 0 2 2" shape-rendering="crispEdges"><rect x="1" y="0" width="1" height="2" fill="#a8a8a8"/><rect x="0" y="1" width="1" height="1" fill="#c8c8c8"/></svg>
<svg style="position:absolute;left:317px;top:67px;" width="2" height="2" viewBox="0 0 2 2" shape-rendering="crispEdges"><rect x="1" y="0" width="1" height="2" fill="#a8a8a8"/><rect x="0" y="1" width="1" height="1" fill="#c8c8c8"/></svg>
<svg style="position:absolute;left:322px;top:67px;" width="2" height="2" viewBox="0 0 2 2" shape-rendering="crispEdges"><rect x="1" y="0" width="1" height="2" fill="#a8a8a8"/><rect x="0" y="1" width="1" height="1" fill="#c8c8c8"/></svg>
<svg style="position:absolute;left:327px;top:67px;" width="2" height="2" viewBox="0 0 2 2" shape-rendering="crispEdges"><rect x="1" y="0" width="1" height="2" fill="#a8a8a8"/><rect x="0" y="1" width="1" height="1" fill="#c8c8c8"/></svg>
<svg style="position:absolute;left:332px;top:67px;" width="2" height="2" viewBox="0 0 2 2" shape-rendering="crispEdges"><rect x="1" y="0" width="1" height="2" fill="#a8a8a8"/><rect x="0" y="1" width="1" height="1" fill="#c8c8c8"/></svg>
<svg style="position:absolute;left:337px;top:67px;" width="2" height="2" viewBox="0 0 2 2" shape-rendering="crispEdges"><rect x="1" y="0" width="1" height="2" fill="#a8a8a8"/><rect x="0" y="1" width="1" height="1" fill="#c8c8c8"/></svg>
<svg style="position:absolute;left:342px;top:67px;" width="2" height="2" viewBox="0 0 2 2" shape-rendering="crispEdges"><rect x="1" y="0" width="1" height="2" fill="#a8a8a8"/><rect x="0" y="1" width="1" height="1" fill="#c8c8c8"/></svg>
<svg style="position:absolute;left:347px;top:67px;" width="2" height="2" viewBox="0 0 2 2" shape-rendering="crispEdges"><rect x="1" y="0" width="1" height="2" fill="#a8a8a8"/><rect x="0" y="1" width="1" height="1" fill="#c8c8c8"/></svg>
<svg style="position:absolute;left:352px;top:67px;" width="2" height="2" viewBox="0 0 2 2" shape-rendering="crispEdges"><rect x="1" y="0" width="1" height="2" fill="#a8a8a8"/><rect x="0" y="1" width="1" height="1" fill="#c8c8c8"/></svg>
<svg style="position:absolute;left:357px;top:67px;" width="2" height="2" viewBox="0 0 2 2" shape-rendering="crispEdges"><rect x="1" y="0" width="1" height="2" fill="#a8a8a8"/><rect x="0" y="1" width="1" height="1" fill="#c8c8c8"/></svg>
<svg style="position:absolute;left:362px;top:67px;" width="2" height="2" viewBox="0 0 2 2" shape-rendering="crispEdges"><rect x="1" y="0" width="1" height="2" fill="#a8a8a8"/><rect x="0" y="1" width="1" height="1" fill="#c8c8c8"/></svg>
<svg style="position:absolute;left:367px;top:67px;" width="2" height="2" viewBox="0 0 2 2" shape-rendering="crispEdges"><rect x="1" y="0" width="1" height="2" fill="#a8a8a8"/><rect x="0" y="1" width="1" height="1" fill="#c8c8c8"/></svg>
<svg style="position:absolute;left:372px;top:67px;" width="2" height="2" viewBox="0 0 2 2" shape-rendering="crispEdges"><rect x="1" y="0" width="1" height="2" fill="#a8a8a8"/><rect x="0" y="1" width="1" height="1" fill="#c8c8c8"/></svg>
<svg style="position:absolute;left:377px;top:67px;" width="2" height="2" viewBox="0 0 2 2" shape-rendering="crispEdges"><rect x="1" y="0" width="1" height="2" fill="#a8a8a8"/><rect x="0" y="1" width="1" height="1" fill="#c8c8c8"/></svg>
<svg style="position:absolute;left:382px;top:67px;" width="2" height="2" viewBox="0 0 2 2" shape-rendering="crispEdges"><rect x="1" y="0" width="1" height="2" fill="#a8a8a8"/><rect x="0" y="1" width="1" height="1" fill="#c8c8c8"/></svg>
<svg style="position:absolute;left:387px;top:67px;" width="2" height="2" viewBox="0 0 2 2" shape-rendering="crispEdges"><rect x="1" y="0" width="1" height="2" fill="#a8a8a8"/><rect x="0" y="1" width="1" height="1" fill="#c8c8c8"/></svg>
<svg style="position:absolute;left:392px;top:67px;" width="2" height="2" viewBox="0 0 2 2" shape-rendering="crispEdges"><rect x="1" y="0" width="1" height="2" fill="#a8a8a8"/><rect x="0" y="1" width="1" height="1" fill="#c8c8c8"/></svg>
<div style="position:absolute;left:403px;top:61px;width:903px;height:689px;background:#6f6f6f;"></div>
<div style="position:absolute;left:404px;top:62px;width:902px;height:688px;background:#969696;"></div>
<div style="position:absolute;left:6px;top:83px;width:374px;height:387px;border:1px solid #ffffff;border-radius:3px;box-sizing:border-box;"></div>
<div style="position:absolute;left:5px;top:82px;width:374px;height:387px;border:1px solid #d5dfe5;border-radius:3px;box-sizing:border-box;"></div>
<div style="position:absolute;left:11px;top:80px;width:186.296875px;height:5px;background:#f0f0f0;"></div>
<div class="t" style="left:14.00px;top:76px;font-size:12px;line-height:12px;color:#000;transform:scaleX(0.99);transform-origin:0 0;">Сортировка и порядок чертежей</div>
<div style="position:absolute;left:8px;top:91px;width:19px;height:19px;border:1px solid #6d6d6d;border-radius:3px;box-sizing:border-box;background:#f0f0f0;box-shadow:inset 0 0 0 1px #fafafa;"></div>
<svg style="position:absolute;left:8px;top:91px;" width="19" height="19" viewBox="0 0 19 19"><defs><radialGradient id="gg" cx="0.4" cy="0.35" r="0.7"><stop offset="0" stop-color="#40d040"/><stop offset="1" stop-color="#008000"/></radialGradient></defs><circle cx="10" cy="9.8" r="6.3" fill="url(#gg)"/><path d="M10 4.5 L14.2 9 H11.5 V14 H8.5 V9 H5.8Z" fill="#fff"/></svg>
<div style="position:absolute;left:33px;top:91px;width:19px;height:19px;border:1px solid #b4b4b4;border-radius:3px;box-sizing:border-box;background:#f0f0f0;box-shadow:inset 0 0 0 1px #fafafa;"></div>
<svg style="position:absolute;left:33px;top:91px;" width="19" height="19" viewBox="0 0 19 19"><path d="M7 3 H14 L17.5 6.5 V13 L14 16.5 H7 L3.5 13 V6.5Z" fill="#a4a4a4"/><path d="M10.5 15 L14.8 10.5 H12 V5 H9 V10.5 H6.2Z" fill="#fff"/></svg>
<div style="position:absolute;left:58px;top:91px;width:19px;height:19px;border:1px solid #b4b4b4;border-radius:3px;box-sizing:border-box;background:#f0f0f0;box-shadow:inset 0 0 0 1px #fafafa;"></div>
<svg style="position:absolute;left:58px;top:91px;" width="19" height="19" viewBox="0 0 19 19"><rect x="3" y="2" width="14" height="1.6" fill="#a4a4a4"/><path d="M6.5 5 H14 L17.5 8 V18 H4 V8Z" fill="#a4a4a4"/><path d="M10.5 6.5 L14.8 11 H12 V17 H9 V11 H6.2Z" fill="#fff"/></svg>
<div style="position:absolute;left:83px;top:91px;width:19px;height:19px;border:1px solid #b4b4b4;border-radius:3px;box-sizing:border-box;background:#f0f0f0;box-shadow:inset 0 0 0 1px #fafafa;"></div>
<svg style="position:absolute;left:83px;top:91px;" width="19" height="19" viewBox="0 0 19 19"><path d="M6.5 2.5 H14 L17.5 6 V17.5 H3.5 V6Z" fill="#a4a4a4"/><path d="M10.5 14 L14.8 9.5 H12 V3 H9 V9.5 H6.2Z" fill="#fff"/></svg>
<div style="position:absolute;left:8px;top:116px;width:367px;height:351px;background:#fff;border-top:1px solid #a0a0a0;border-left:1px solid #a0a0a0;border-right:1px solid #e8e8e8;border-bottom:1px solid #e8e8e8;box-sizing:border-box;box-shadow:inset 1px 1px 0 #696969;"></div>
<svg style="position:absolute;left:17px;top:124px;" width="9" height="9" viewBox="0 0 9 9" shape-rendering="crispEdges"><defs><linearGradient id="tbg" x1="0" y1="0" x2="0" y2="1"><stop offset="0" stop-color="#ffffff"/><stop offset="1" stop-color="#d8d8d8"/></linearGradient></defs><rect x="0.5" y="0.5" width="8" height="8" rx="1.5" fill="url(#tbg)" stroke="#9a9a9a"/><path d="M2 4.5 H7" stroke="#3050a8"/></svg>
<div style="position:absolute;left:27px;top:128px;width:1px;height:1px;background:#888;"></div>
<div style="position:absolute;left:29px;top:128px;width:1px;height:1px;background:#888;"></div>
<div style="position:absolute;left:31px;top:128px;width:1px;height:1px;background:#888;"></div>
<svg style="position:absolute;left:33px;top:121px;" width="14" height="11" viewBox="0 0 14 11" shape-rendering="crispEdges"><path d="M0.5 2.5 H13.5 V10.5 H0.5Z" fill="#808000" stroke="#6a6a6a"/><rect x="1" y="3" width="12" height="1" fill="#fff"/><path d="M1.5 2.5 V1.5 Q1.5 0.5 2.5 0.5 H7.5 L8.5 2.5" fill="#fff" stroke="#6a6a6a"/><rect x="4" y="1" width="4" height="1" fill="#808000"/></svg>
<div class="t" style="left:53px;top:121px;font-size:12px;line-height:12px;color:#000;transform:scaleX(0.9946);transform-origin:0 0;">Шаблон: Спецификация к схеме расположения.tpl</div>
<div style="position:absolute;left:40px;top:135px;width:1px;height:1px;background:#888;"></div>
<div style="position:absolute;left:40px;top:137px;width:1px;height:1px;background:#888;"></div>
<div style="position:absolute;left:40px;top:139px;width:1px;height:1px;background:#888;"></div>
<div style="position:absolute;left:40px;top:141px;width:1px;height:1px;background:#888;"></div>
<div style="position:absolute;left:40px;top:143px;width:1px;height:1px;background:#888;"></div>
<div style="position:absolute;left:40px;top:145px;width:1px;height:1px;background:#888;"></div>
<div style="position:absolute;left:40px;top:147px;width:1px;height:1px;background:#888;"></div>
<div style="position:absolute;left:40px;top:149px;width:1px;height:1px;background:#888;"></div>
<div style="position:absolute;left:40px;top:151px;width:1px;height:1px;background:#888;"></div>
<div style="position:absolute;left:40px;top:153px;width:1px;height:1px;background:#888;"></div>
<div style="position:absolute;left:40px;top:155px;width:1px;height:1px;background:#888;"></div>
<div style="position:absolute;left:40px;top:157px;width:1px;height:1px;background:#888;"></div>
<div style="position:absolute;left:40px;top:159px;width:1px;height:1px;background:#888;"></div>
<svg style="position:absolute;left:36px;top:142px;" width="9" height="9" viewBox="0 0 9 9" shape-rendering="crispEdges"><defs><linearGradient id="tbg" x1="0" y1="0" x2="0" y2="1"><stop offset="0" stop-color="#ffffff"/><stop offset="1" stop-color="#d8d8d8"/></linearGradient></defs><rect x="0.5" y="0.5" width="8" height="8" rx="1.5" fill="url(#tbg)" stroke="#9a9a9a"/><path d="M2 4.5 H7" stroke="#3050a8"/><path d="M4.5 2 V7" stroke="#3050a8"/></svg>
<div style="position:absolute;left:46px;top:146px;width:1px;height:1px;background:#888;"></div>
<div style="position:absolute;left:48px;top:146px;width:1px;height:1px;background:#888;"></div>
<div style="position:absolute;left:50px;top:146px;width:1px;height:1px;background:#888;"></div>
<svg style="position:absolute;left:52px;top:139px;" width="14" height="11" viewBox="0 0 14 11" shape-rendering="crispEdges"><path d="M0.5 2.5 H13.5 V10.5 H0.5Z" fill="#ffff00" stroke="#808000"/><rect x="1" y="3" width="12" height="1" fill="#fff"/><path d="M1.5 2.5 V1.5 Q1.5 0.5 2.5 0.5 H7.5 L8.5 2.5" fill="#fff" stroke="#808000"/><rect x="4" y="1" width="4" height="1" fill="#ffff00"/></svg>
<div class="t" style="left:72.00px;top:139px;font-size:12px;line-height:12px;color:#000;transform:scaleX(0.99);transform-origin:0 0;">Заголовок</div>
<svg style="position:absolute;left:36px;top:160px;" width="9" height="9" viewBox="0 0 9 9" shape-rendering="crispEdges"><defs><linearGradient id="tbg" x1="0" y1="0" x2="0" y2="1"><stop offset="0" stop-color="#ffffff"/><stop offset="1" stop-color="#d8d8d8"/></linearGradient></defs><rect x="0.5" y="0.5" width="8" height="8" rx="1.5" fill="url(#tbg)" stroke="#9a9a9a"/><path d="M2 4.5 H7" stroke="#3050a8"/></svg>
<div style="position:absolute;left:46px;top:164px;width:1px;height:1px;background:#888;"></div>
<div style="position:absolute;left:48px;top:164px;width:1px;height:1px;background:#888;"></div>
<div style="position:absolute;left:50px;top:164px;width:1px;height:1px;background:#888;"></div>
<svg style="position:absolute;left:52px;top:157px;" width="14" height="11" viewBox="0 0 14 11" shape-rendering="crispEdges"><path d="M0.5 2.5 H13.5 V10.5 H0.5Z" fill="#ffff00" stroke="#808000"/><rect x="1" y="3" width="12" height="1" fill="#fff"/><path d="M1.5 2.5 V1.5 Q1.5 0.5 2.5 0.5 H7.5 L8.5 2.5" fill="#fff" stroke="#808000"/><rect x="4" y="1" width="4" height="1" fill="#ffff00"/></svg>
<div class="t" style="left:72.00px;top:157px;font-size:12px;line-height:12px;color:#000;transform:scaleX(0.99);transform-origin:0 0;">Сборки</div>
<div style="position:absolute;left:59px;top:172px;width:1px;height:1px;background:#888;"></div>
<div style="position:absolute;left:59px;top:174px;width:1px;height:1px;background:#888;"></div>
<div style="position:absolute;left:59px;top:176px;width:1px;height:1px;background:#888;"></div>
<div style="position:absolute;left:59px;top:178px;width:1px;height:1px;background:#888;"></div>
<div style="position:absolute;left:59px;top:180px;width:1px;height:1px;background:#888;"></div>
<div style="position:absolute;left:59px;top:182px;width:1px;height:1px;background:#888;"></div>
<div style="position:absolute;left:59px;top:184px;width:1px;height:1px;background:#888;"></div>
<div style="position:absolute;left:59px;top:186px;width:1px;height:1px;background:#888;"></div>
<div style="position:absolute;left:59px;top:188px;width:1px;height:1px;background:#888;"></div>
<div style="position:absolute;left:59px;top:190px;width:1px;height:1px;background:#888;"></div>
<div style="position:absolute;left:59px;top:192px;width:1px;height:1px;background:#888;"></div>
<div style="position:absolute;left:59px;top:194px;width:1px;height:1px;background:#888;"></div>
<div style="position:absolute;left:59px;top:196px;width:1px;height:1px;background:#888;"></div>
<div style="position:absolute;left:59px;top:198px;width:1px;height:1px;background:#888;"></div>
<div style="position:absolute;left:59px;top:200px;width:1px;height:1px;background:#888;"></div>
<div style="position:absolute;left:59px;top:202px;width:1px;height:1px;background:#888;"></div>
<div style="position:absolute;left:59px;top:204px;width:1px;height:1px;background:#888;"></div>
<div style="position:absolute;left:59px;top:206px;width:1px;height:1px;background:#888;"></div>
<div style="position:absolute;left:59px;top:208px;width:1px;height:1px;background:#888;"></div>
<div style="position:absolute;left:59px;top:210px;width:1px;height:1px;background:#888;"></div>
<div style="position:absolute;left:59px;top:212px;width:1px;height:1px;background:#888;"></div>
<div style="position:absolute;left:59px;top:214px;width:1px;height:1px;background:#888;"></div>
<div style="position:absolute;left:59px;top:216px;width:1px;height:1px;background:#888;"></div>
<div style="position:absolute;left:59px;top:218px;width:1px;height:1px;background:#888;"></div>
<div style="position:absolute;left:59px;top:220px;width:1px;height:1px;background:#888;"></div>
<div style="position:absolute;left:59px;top:222px;width:1px;height:1px;background:#888;"></div>
<div style="position:absolute;left:59px;top:224px;width:1px;height:1px;background:#888;"></div>
<div style="position:absolute;left:59px;top:226px;width:1px;height:1px;background:#888;"></div>
<div style="position:absolute;left:59px;top:228px;width:1px;height:1px;background:#888;"></div>
<div style="position:absolute;left:59px;top:230px;width:1px;height:1px;background:#888;"></div>
<div style="position:absolute;left:59px;top:232px;width:1px;height:1px;background:#888;"></div>
<div style="position:absolute;left:59px;top:234px;width:1px;height:1px;background:#888;"></div>
<div style="position:absolute;left:59px;top:236px;width:1px;height:1px;background:#888;"></div>
<div style="position:absolute;left:59px;top:238px;width:1px;height:1px;background:#888;"></div>
<div style="position:absolute;left:59px;top:240px;width:1px;height:1px;background:#888;"></div>
<div style="position:absolute;left:59px;top:242px;width:1px;height:1px;background:#888;"></div>
<div style="position:absolute;left:59px;top:244px;width:1px;height:1px;background:#888;"></div>
<div style="position:absolute;left:59px;top:246px;width:1px;height:1px;background:#888;"></div>
<div style="position:absolute;left:59px;top:248px;width:1px;height:1px;background:#888;"></div>
<div style="position:absolute;left:59px;top:250px;width:1px;height:1px;background:#888;"></div>
<div style="position:absolute;left:59px;top:252px;width:1px;height:1px;background:#888;"></div>
<div style="position:absolute;left:59px;top:254px;width:1px;height:1px;background:#888;"></div>
<div style="position:absolute;left:61px;top:182px;width:1px;height:1px;background:#888;"></div>
<div style="position:absolute;left:63px;top:182px;width:1px;height:1px;background:#888;"></div>
<div style="position:absolute;left:65px;top:182px;width:1px;height:1px;background:#888;"></div>
<div style="position:absolute;left:67px;top:182px;width:1px;height:1px;background:#888;"></div>
<div style="position:absolute;left:69px;top:182px;width:1px;height:1px;background:#888;"></div>
<svg style="position:absolute;left:75px;top:174px;" width="8" height="15" viewBox="0 0 8 15" shape-rendering="crispEdges"><path d="M3 0H4V2H5V4H6V6H7V7H5V6H2V7H0V6H1V4H2V2H3Z" fill="#000080"/><rect x="3" y="3" width="1" height="1" fill="#fff"/><path d="M0 8H6V10H5V11H4V12H3V13H6V12H7V15H0V13H1V12H2V11H3V10H1V11H0Z" fill="#800000"/></svg>
<div class="t" style="left:91.00px;top:175px;font-size:12px;line-height:12px;color:#000;transform:scaleX(0.87);transform-origin:0 0;">V</div>
<div class="t" style="left:97.96px;top:175px;font-size:12px;line-height:12px;color:#000;transform:scaleX(0.99);transform-origin:0 0;">alue</div>
<div class="t" style="left:120.42px;top:175px;font-size:12px;line-height:12px;color:#000;transform:scaleX(0.87);transform-origin:0 0;">F</div>
<div class="t" style="left:126.80px;top:175px;font-size:12px;line-height:12px;color:#000;transform:scaleX(0.99);transform-origin:0 0;">ield (Поле значения)</div>
<div style="position:absolute;left:61px;top:200px;width:1px;height:1px;background:#888;"></div>
<div style="position:absolute;left:63px;top:200px;width:1px;height:1px;background:#888;"></div>
<div style="position:absolute;left:65px;top:200px;width:1px;height:1px;background:#888;"></div>
<div style="position:absolute;left:67px;top:200px;width:1px;height:1px;background:#888;"></div>
<div style="position:absolute;left:69px;top:200px;width:1px;height:1px;background:#888;"></div>
<svg style="position:absolute;left:75px;top:192px;" width="8" height="15" viewBox="0 0 8 15" shape-rendering="crispEdges"><path d="M3 0H4V2H5V4H6V6H7V7H5V6H2V7H0V6H1V4H2V2H3Z" fill="#000080"/><rect x="3" y="3" width="1" height="1" fill="#fff"/><path d="M0 8H6V10H5V11H4V12H3V13H6V12H7V15H0V13H1V12H2V11H3V10H1V11H0Z" fill="#800000"/></svg>
<div class="t" style="left:91.00px;top:193px;font-size:12px;line-height:12px;color:#000;transform:scaleX(0.87);transform-origin:0 0;">V</div>
<div class="t" style="left:97.96px;top:193px;font-size:12px;line-height:12px;color:#000;transform:scaleX(0.99);transform-origin:0 0;">alue</div>
<div class="t" style="left:120.42px;top:193px;font-size:12px;line-height:12px;color:#000;transform:scaleX(0.87);transform-origin:0 0;">F</div>
<div class="t" style="left:126.80px;top:193px;font-size:12px;line-height:12px;color:#000;transform:scaleX(0.99);transform-origin:0 0;">ield (Поле значения)</div>
<div class="t" style="left:238.99px;top:193px;font-size:12px;line-height:12px;color:#000;transform:scaleX(0.87);transform-origin:0 0;">_1</div>
<div style="position:absolute;left:61px;top:218px;width:1px;height:1px;background:#888;"></div>
<div style="position:absolute;left:63px;top:218px;width:1px;height:1px;background:#888;"></div>
<div style="position:absolute;left:65px;top:218px;width:1px;height:1px;background:#888;"></div>
<div style="position:absolute;left:67px;top:218px;width:1px;height:1px;background:#888;"></div>
<div style="position:absolute;left:69px;top:218px;width:1px;height:1px;background:#888;"></div>
<svg style="position:absolute;left:75px;top:210px;" width="8" height="15" viewBox="0 0 8 15" shape-rendering="crispEdges"><path d="M3 0H4V2H5V4H6V6H7V7H5V6H2V7H0V6H1V4H2V2H3Z" fill="#000080"/><rect x="3" y="3" width="1" height="1" fill="#fff"/><path d="M0 8H6V10H5V11H4V12H3V13H6V12H7V15H0V13H1V12H2V11H3V10H1V11H0Z" fill="#800000"/></svg>
<div class="t" style="left:91.00px;top:211px;font-size:12px;line-height:12px;color:#000;transform:scaleX(0.87);transform-origin:0 0;">V</div>
<div class="t" style="left:97.96px;top:211px;font-size:12px;line-height:12px;color:#000;transform:scaleX(0.99);transform-origin:0 0;">alue</div>
<div class="t" style="left:120.42px;top:211px;font-size:12px;line-height:12px;color:#000;transform:scaleX(0.87);transform-origin:0 0;">F</div>
<div class="t" style="left:126.80px;top:211px;font-size:12px;line-height:12px;color:#000;transform:scaleX(0.99);transform-origin:0 0;">ield (Поле значения)</div>
<div class="t" style="left:238.99px;top:211px;font-size:12px;line-height:12px;color:#000;transform:scaleX(0.87);transform-origin:0 0;">_2</div>
<div style="position:absolute;left:61px;top:236px;width:1px;height:1px;background:#888;"></div>
<div style="position:absolute;left:63px;top:236px;width:1px;height:1px;background:#888;"></div>
<div style="position:absolute;left:65px;top:236px;width:1px;height:1px;background:#888;"></div>
<div style="position:absolute;left:67px;top:236px;width:1px;height:1px;background:#888;"></div>
<div style="position:absolute;left:69px;top:236px;width:1px;height:1px;background:#888;"></div>
<svg style="position:absolute;left:75px;top:228px;" width="8" height="15" viewBox="0 0 8 15" shape-rendering="crispEdges"><path d="M3 0H4V2H5V4H6V6H7V7H5V6H2V7H0V6H1V4H2V2H3Z" fill="#000080"/><rect x="3" y="3" width="1" height="1" fill="#fff"/><path d="M0 8H6V10H5V11H4V12H3V13H6V12H7V15H0V13H1V12H2V11H3V10H1V11H0Z" fill="#800000"/></svg>
<div class="t" style="left:91.00px;top:229px;font-size:12px;line-height:12px;color:#000;transform:scaleX(0.87);transform-origin:0 0;">V</div>
<div class="t" style="left:97.96px;top:229px;font-size:12px;line-height:12px;color:#000;transform:scaleX(0.99);transform-origin:0 0;">alue</div>
<div class="t" style="left:120.42px;top:229px;font-size:12px;line-height:12px;color:#000;transform:scaleX(0.87);transform-origin:0 0;">F</div>
<div class="t" style="left:126.80px;top:229px;font-size:12px;line-height:12px;color:#000;transform:scaleX(0.99);transform-origin:0 0;">ield (Поле значения)</div>
<div class="t" style="left:238.99px;top:229px;font-size:12px;line-height:12px;color:#000;transform:scaleX(0.87);transform-origin:0 0;">_3</div>
<div style="position:absolute;left:61px;top:254px;width:1px;height:1px;background:#888;"></div>
<div style="position:absolute;left:63px;top:254px;width:1px;height:1px;background:#888;"></div>
<div style="position:absolute;left:65px;top:254px;width:1px;height:1px;background:#888;"></div>
<div style="position:absolute;left:67px;top:254px;width:1px;height:1px;background:#888;"></div>
<div style="position:absolute;left:69px;top:254px;width:1px;height:1px;background:#888;"></div>
<div style="position:absolute;left:89px;top:244px;width:60px;height:18px;background:#ececec;"></div>
<svg style="position:absolute;left:75px;top:246px;" width="8" height="15" viewBox="0 0 8 15" shape-rendering="crispEdges"><path d="M3 0H4V2H5V4H6V6H7V7H5V6H2V7H0V6H1V4H2V2H3Z" fill="#000080"/><rect x="3" y="3" width="1" height="1" fill="#fff"/><path d="M0 8H6V10H5V11H4V12H3V13H6V12H7V15H0V13H1V12H2V11H3V10H1V11H0Z" fill="#800000"/></svg>
<div class="t" style="left:91.00px;top:247px;font-size:12px;line-height:12px;color:#000;transform:scaleX(0.99);transform-origin:0 0;">att</div>
<div class="t" style="left:104.19px;top:247px;font-size:12px;line-height:12px;color:#000;transform:scaleX(0.87);transform-origin:0 0;">_1_</div>
<div class="t" style="left:121.61px;top:247px;font-size:12px;line-height:12px;color:#000;transform:scaleX(0.99);transform-origin:0 0;">поле</div>
<div style="position:absolute;left:6px;top:483px;width:374px;height:300px;border:1px solid #ffffff;border-radius:3px;box-sizing:border-box;"></div>
<div style="position:absolute;left:5px;top:482px;width:374px;height:300px;border:1px solid #d5dfe5;border-radius:3px;box-sizing:border-box;"></div>
<div style="position:absolute;left:11px;top:480px;width:215.28125px;height:5px;background:#f0f0f0;"></div>
<div class="t" style="left:14.00px;top:476px;font-size:12px;line-height:12px;color:#000;transform:scaleX(0.99);transform-origin:0 0;">Панель предварительного просмотра</div>
<div style="position:absolute;left:8px;top:491px;width:367px;height:270px;background:#fff;border-top:1px solid #a0a0a0;border-left:1px solid #a0a0a0;border-right:1px solid #e8e8e8;box-sizing:border-box;box-shadow:inset 1px 1px 0 #696969;"></div>
<div style="position:absolute;left:10px;top:493px;width:347px;height:23px;background:linear-gradient(180deg,#ffffff 0%,#ffffff 40%,#f3f4f6 41%,#f0f1f4 100%);border-bottom:1px solid #d5d5d5;box-sizing:border-box;"></div>
<div style="position:absolute;left:153px;top:493px;width:1px;height:22px;background:#e0e0e0;"></div>
<div style="position:absolute;left:304px;top:493px;width:1px;height:22px;background:#e0e0e0;"></div>
<div class="t" style="left:17.00px;top:499px;font-size:12px;line-height:12px;color:#000;transform:scaleX(0.99);transform-origin:0 0;">Свойство</div>
<div class="t" style="left:160.00px;top:499px;font-size:12px;line-height:12px;color:#000;transform:scaleX(0.99);transform-origin:0 0;">Значение</div>
<div class="t" style="left:17.00px;top:521px;font-size:12px;line-height:12px;color:#000;transform:scaleX(0.99);transform-origin:0 0;">Имя</div>
<div class="t" style="left:160.00px;top:521px;font-size:12px;line-height:12px;color:#000;transform:scaleX(0.99);transform-origin:0 0;">att</div>
<div class="t" style="left:173.19px;top:521px;font-size:12px;line-height:12px;color:#000;transform:scaleX(0.87);transform-origin:0 0;">_1_</div>
<div class="t" style="left:190.61px;top:521px;font-size:12px;line-height:12px;color:#000;transform:scaleX(0.99);transform-origin:0 0;">поле</div>
<div class="t" style="left:17.00px;top:540px;font-size:12px;line-height:12px;color:#000;transform:scaleX(0.99);transform-origin:0 0;">Скрыть при выводе</div>
<div class="t" style="left:160.00px;top:540px;font-size:12px;line-height:12px;color:#000;transform:scaleX(0.99);transform-origin:0 0;">Ложь</div>
<div class="t" style="left:17.00px;top:559px;font-size:12px;line-height:12px;color:#000;transform:scaleX(0.87);transform-origin:0 0;">X</div>
<div class="t" style="left:160.00px;top:559px;font-size:12px;line-height:12px;color:#000;transform:scaleX(0.87);transform-origin:0 0;">21.00</div>
<div class="t" style="left:17.00px;top:578px;font-size:12px;line-height:12px;color:#000;transform:scaleX(0.87);transform-origin:0 0;">Y</div>
<div class="t" style="left:160.00px;top:578px;font-size:12px;line-height:12px;color:#000;transform:scaleX(0.87);transform-origin:0 0;">2.00</div>
<div class="t" style="left:17.00px;top:597px;font-size:12px;line-height:12px;color:#000;transform:scaleX(0.99);transform-origin:0 0;">Формула</div>
<div class="t" style="left:160.00px;top:597px;font-size:12px;line-height:12px;color:#000;transform:scaleX(0.87);transform-origin:0 0;">G</div>
<div class="t" style="left:168.12px;top:597px;font-size:12px;line-height:12px;color:#000;transform:scaleX(0.99);transform-origin:0 0;">et</div>
<div class="t" style="left:178.02px;top:597px;font-size:12px;line-height:12px;color:#000;transform:scaleX(0.87);transform-origin:0 0;">V</div>
<div class="t" style="left:184.98px;top:597px;font-size:12px;line-height:12px;color:#000;transform:scaleX(0.99);transform-origin:0 0;">alue("att</div>
<div class="t" style="left:228.81px;top:597px;font-size:12px;line-height:12px;color:#000;transform:scaleX(0.87);transform-origin:0 0;">_1</div>
<div class="t" style="left:240.42px;top:597px;font-size:12px;line-height:12px;color:#000;transform:scaleX(0.99);transform-origin:0 0;">")</div>
<div class="t" style="left:17.00px;top:616px;font-size:12px;line-height:12px;color:#000;transform:scaleX(0.99);transform-origin:0 0;">Тип данных</div>
<div class="t" style="left:160.00px;top:616px;font-size:12px;line-height:12px;color:#000;transform:scaleX(0.99);transform-origin:0 0;">Текст</div>
<div class="t" style="left:17.00px;top:635px;font-size:12px;line-height:12px;color:#000;transform:scaleX(0.99);transform-origin:0 0;">Значение</div>
<div class="t" style="left:17.00px;top:654px;font-size:12px;line-height:12px;color:#000;transform:scaleX(0.99);transform-origin:0 0;">По ширине</div>
<div class="t" style="left:160.00px;top:654px;font-size:12px;line-height:12px;color:#000;transform:scaleX(0.99);transform-origin:0 0;">Слева</div>
<div class="t" style="left:17.00px;top:673px;font-size:12px;line-height:12px;color:#000;transform:scaleX(0.99);transform-origin:0 0;">Угол</div>
<div class="t" style="left:160.00px;top:673px;font-size:12px;line-height:12px;color:#000;transform:scaleX(0.87);transform-origin:0 0;">0.00</div>
<div class="t" style="left:17.00px;top:692px;font-size:12px;line-height:12px;color:#000;transform:scaleX(0.99);transform-origin:0 0;">Длина</div>
<div class="t" style="left:160.00px;top:692px;font-size:12px;line-height:12px;color:#000;transform:scaleX(0.87);transform-origin:0 0;">20</div>
<div class="t" style="left:17.00px;top:711px;font-size:12px;line-height:12px;color:#000;transform:scaleX(0.99);transform-origin:0 0;">Десятичные цифры</div>
<div class="t" style="left:160.00px;top:711px;font-size:12px;line-height:12px;color:#000;transform:scaleX(0.87);transform-origin:0 0;">1</div>
<div class="t" style="left:17.00px;top:730px;font-size:12px;line-height:12px;color:#000;transform:scaleX(0.99);transform-origin:0 0;">Сортировать</div>
<div class="t" style="left:160.00px;top:730px;font-size:12px;line-height:12px;color:#000;transform:scaleX(0.99);transform-origin:0 0;">Нет</div>
<div style="position:absolute;left:357px;top:493px;width:16px;height:257px;background:linear-gradient(90deg,#e4e4e4,#f0f0f0 30%,#f2f2f2 60%,#e6e6e6);"></div>
<div style="position:absolute;left:374px;top:493px;width:1px;height:257px;background:#7a8290;"></div>
<div style="position:absolute;left:375px;top:493px;width:2px;height:257px;background:#fff;"></div>
<svg style="position:absolute;left:362px;top:741px;" width="8" height="5" viewBox="0 0 8 5" shape-rendering="crispEdges"><path d="M0 0 H7.5 L3.75 4.5Z" fill="#303030"/></svg>
<div style="position:absolute;left:404px;top:61px;width:902px;height:689px;overflow:hidden;">
<div style="position:absolute;left:296px;top:210px;width:606px;height:1px;background:repeating-linear-gradient(90deg,#000 0 2px,#ff00ff 2px 4px,#969696 4px 5px,#ff00ff 5px 7px);"></div>
<div style="position:absolute;left:296px;top:211px;width:606px;height:2px;background:#ff0000;"></div>
<div style="position:absolute;left:296px;top:275px;width:606px;height:2px;background:#0000ff;"></div>
</div>
<svg style="position:absolute;left:0;top:0;overflow:visible" width="1306" height="750"><g fill="none" stroke="#0a0a0a" stroke-width="2" stroke-linejoin="round"><path transform="translate(1027.00,300.70) scale(1)" d="M9 0H2.5Q0 0 0 2.5V12.5Q0 15 2.5 15H9" vector-effect="non-scaling-stroke"/><path transform="translate(1041.00,300.70) scale(1)" d="M0 0L9 15M9 0L0 15" vector-effect="non-scaling-stroke"/><path transform="translate(1055.00,300.70) scale(1)" d="M0 7.5H9V2.5Q9 0 6.5 0H2.5Q0 0 0 2.5V12.5Q0 15 2.5 15H9" vector-effect="non-scaling-stroke"/><path transform="translate(1068.50,300.70) scale(1)" d="M0 15V0L5.75 9L11.5 0V15" vector-effect="non-scaling-stroke"/><path transform="translate(1086.00,300.70) scale(1)" d="M0 7.5H9V2.5Q9 0 6.5 0H2.5Q0 0 0 2.5V12.5Q0 15 2.5 15H9" vector-effect="non-scaling-stroke"/><path transform="translate(1110.30,300.70) scale(1)" d="M0 21V0H6.5Q9 0 9 2.5V12.5Q9 15 6.5 15H0" vector-effect="non-scaling-stroke"/><path transform="translate(1124.60,300.70) scale(1)" d="M9 0V15M9 15H2.5Q0 15 0 12.5V2.5Q0 0 2.5 0H9" vector-effect="non-scaling-stroke"/><path transform="translate(1138.30,300.70) scale(1)" d="M9 0H2.5Q0 0 0 2.5V12.5Q0 15 2.5 15H9" vector-effect="non-scaling-stroke"/><path transform="translate(1152.60,300.70) scale(1)" d="M0 15V2.5Q0 0 2.5 0H6.5Q9 0 9 2.5V15" vector-effect="non-scaling-stroke"/><path transform="translate(1166.30,300.70) scale(1)" d="M2.5 0H6.5Q9 0 9 2.5V12.5Q9 15 6.5 15H2.5Q0 15 0 12.5V2.5Q0 0 2.5 0Z" vector-effect="non-scaling-stroke"/><path transform="translate(1180.40,300.70) scale(1)" d="M0 15L3 0H9V15" vector-effect="non-scaling-stroke"/><path transform="translate(1194.00,300.70) scale(1)" d="M2.5 0H6.5Q9 0 9 2.5V12.5Q9 15 6.5 15H2.5Q0 15 0 12.5V2.5Q0 0 2.5 0Z" vector-effect="non-scaling-stroke"/><path transform="translate(1208.00,300.70) scale(1)" d="M0 0L13 15M13 0L0 15M6.5 0V15" vector-effect="non-scaling-stroke"/><path transform="translate(1226.00,300.70) scale(1)" d="M0 7.5H9V2.5Q9 0 6.5 0H2.5Q0 0 0 2.5V12.5Q0 15 2.5 15H9" vector-effect="non-scaling-stroke"/><path transform="translate(1239.60,300.70) scale(1)" d="M0 0V15M9 0V15M0 7.5H9" vector-effect="non-scaling-stroke"/><path transform="translate(1254.00,300.70) scale(1)" d="M0 0V12.5Q0 15 2.5 15H6.5Q9 15 9 12.5M9 0V15" vector-effect="non-scaling-stroke"/><path transform="translate(1268.00,300.70) scale(1)" d="M9 15V0H2.5Q0 0 0 2.5V5Q0 7.5 2.5 7.5H9M4 7.5L0 15" vector-effect="non-scaling-stroke"/></g></svg>
<svg style="position:absolute;left:0;top:0;overflow:visible" width="1306" height="750"><g fill="none" stroke="#141414" stroke-width="1.3" stroke-linejoin="round"><path transform="translate(1077.65,382.30) scale(0.72)" d="M0 -6.5V15M9 -6.5V15M0 4H9" vector-effect="non-scaling-stroke"/><path transform="translate(1088.65,382.30) scale(0.72)" d="M9 0V15M9 15H2.5Q0 15 0 12.5V2.5Q0 0 2.5 0H9" vector-effect="non-scaling-stroke"/><path transform="translate(1098.65,382.30) scale(0.72)" d="M0 0V12.5Q0 15 2.5 15H6.5Q9 15 9 12.5M9 0V15" vector-effect="non-scaling-stroke"/><path transform="translate(1106.65,382.30) scale(0.72)" d="M0 15V0L5.75 9L11.5 0V15" vector-effect="non-scaling-stroke"/><path transform="translate(1118.65,382.30) scale(0.72)" d="M0 7.5H9V2.5Q9 0 6.5 0H2.5Q0 0 0 2.5V12.5Q0 15 2.5 15H9" vector-effect="non-scaling-stroke"/><path transform="translate(1128.65,382.30) scale(0.72)" d="M0 0V15M9 0V15M0 7.5H9" vector-effect="non-scaling-stroke"/><path transform="translate(1139.65,382.30) scale(0.72)" d="M2.5 0H6.5Q9 0 9 2.5V12.5Q9 15 6.5 15H2.5Q0 15 0 12.5V2.5Q0 0 2.5 0Z" vector-effect="non-scaling-stroke"/><path transform="translate(1149.65,382.30) scale(0.72)" d="M0 15V-3Q0 -6 3 -6Q6 -6 6 -3Q6 0 2 1H6.5Q9 1 9 3.5V12.5Q9 15 6.5 15H0" vector-effect="non-scaling-stroke"/><path transform="translate(1158.65,382.30) scale(0.72)" d="M9 0V15M9 15H2.5Q0 15 0 12.5V2.5Q0 0 2.5 0H9" vector-effect="non-scaling-stroke"/><path transform="translate(1168.65,382.30) scale(0.72)" d="M0 0V15M9 0V15M0 7.5H9" vector-effect="non-scaling-stroke"/><path transform="translate(1178.65,382.30) scale(0.72)" d="M0 0V12.5Q0 15 2.5 15H6.5Q9 15 9 12.5M9 0V15" vector-effect="non-scaling-stroke"/><path transform="translate(1189.65,382.30) scale(0.72)" d="M0 7.5H9V2.5Q9 0 6.5 0H2.5Q0 0 0 2.5V12.5Q0 15 2.5 15H9" vector-effect="non-scaling-stroke"/></g></svg>
<div style="position:absolute;left:354px;top:204px;width:705px;height:469px;background:linear-gradient(100deg,#a8dbdb 0%,#a2d7d8 15%,#97cecf 28%,#acdfdf 42%,#a0d6d7 55%,#96cdce 75%,#b0e0e0 90%,#a8dcdc 100%);border:1px solid #3d5a5a;border-radius:7px 7px 5px 5px;box-sizing:border-box;box-shadow:2px 3px 9px rgba(0,0,0,0.45);"></div>
<div style="position:absolute;left:360px;top:205px;width:693px;height:1px;background:rgba(255,255,255,0.45);"></div>
<div class="t" style="left:362.00px;top:213px;font-size:12px;line-height:12px;color:#000;transform:scaleX(0.99);transform-origin:0 0;">Свойства поля значения</div>
<div style="position:absolute;left:1005px;top:205px;width:47px;height:19px;border:1px solid rgba(40,70,70,0.75);border-top:none;border-radius:0 0 5px 5px;box-sizing:border-box;background:linear-gradient(180deg,rgba(255,255,255,0.25),rgba(255,255,255,0.05));"></div>
<svg style="position:absolute;left:1023px;top:208px;" width="13" height="12" viewBox="0 0 13 12"><path d="M3 2.5 L10 9.5 M10 2.5 L3 9.5" stroke="#3a4a55" stroke-width="4" stroke-linecap="square"/><path d="M3 2.5 L10 9.5 M10 2.5 L3 9.5" stroke="#f4f4f4" stroke-width="2" stroke-linecap="square"/></svg>
<div style="position:absolute;left:361px;top:233px;width:691px;height:433px;background:#f0f0f0;border:1px solid #46686a;box-sizing:border-box;"></div>
<div style="position:absolute;left:368px;top:241px;width:679px;height:70px;border:1px solid #ffffff;border-radius:3px;box-sizing:border-box;"></div>
<div style="position:absolute;left:367px;top:240px;width:679px;height:70px;border:1px solid #d5dfe5;border-radius:3px;box-sizing:border-box;"></div>
<div style="position:absolute;left:374px;top:234px;width:75.75px;height:6px;background:#f0f0f0;"></div>
<div class="t" style="left:376.00px;top:235px;font-size:12px;line-height:12px;color:#000;transform:scaleX(0.99);transform-origin:0 0;">Содержимое</div>
<div class="t" style="left:373.00px;top:254px;font-size:12px;line-height:12px;color:#000;transform:scaleX(0.99);transform-origin:0 0;">Формула:</div>
<div style="position:absolute;left:434px;top:251px;width:609px;height:23px;background:#fff;border:1px solid #abadb3;border-left-color:#e2e3ea;border-right-color:#dbdfe6;border-bottom-color:#e3e9ef;box-sizing:border-box;"></div>
<svg style="position:absolute;left:1031px;top:261px;" width="8" height="5" viewBox="0 0 8 5" shape-rendering="crispEdges"><path d="M0 0 H7 L3.5 4Z" fill="#000"/></svg>
<div class="t" style="left:440.00px;top:256px;font-size:12px;line-height:12px;color:#000;transform:scaleX(0.87);transform-origin:0 0;">G</div>
<div class="t" style="left:448.12px;top:256px;font-size:12px;line-height:12px;color:#000;transform:scaleX(0.99);transform-origin:0 0;">et</div>
<div class="t" style="left:458.02px;top:256px;font-size:12px;line-height:12px;color:#000;transform:scaleX(0.87);transform-origin:0 0;">V</div>
<div class="t" style="left:464.98px;top:256px;font-size:12px;line-height:12px;color:#000;transform:scaleX(0.99);transform-origin:0 0;">alue("att</div>
<div class="t" style="left:508.81px;top:256px;font-size:12px;line-height:12px;color:#000;transform:scaleX(0.87);transform-origin:0 0;">_1</div>
<div class="t" style="left:520.42px;top:256px;font-size:12px;line-height:12px;color:#000;transform:scaleX(0.99);transform-origin:0 0;">")</div>
<div style="position:absolute;left:435px;top:283px;width:64px;height:23px;border:1px solid #3c7fb1;border-radius:3px;box-sizing:border-box;background:linear-gradient(180deg,#e5f4fc 0%,#c4e5f6 50%,#98d1ef 51%,#b6def2 100%);box-shadow:inset 0 0 0 1px #6ad0f6;"></div>
<div class="t" style="left:440.00px;top:289px;font-size:12px;line-height:12px;color:#000;transform:scaleX(0.99);transform-origin:0 0;">Атрибут</div>
<div class="t" style="left:484.27px;top:289px;font-size:12px;line-height:12px;color:#000;transform:scaleX(0.87);transform-origin:0 0;">...</div>
<div style="position:absolute;left:505px;top:283px;width:68px;height:23px;border:1px solid #707070;border-radius:3px;box-sizing:border-box;background:linear-gradient(180deg,#f2f2f2 0%,#ebebeb 50%,#dddddd 51%,#cfcfcf 100%);box-shadow:inset 0 0 0 1px #fbfbfb;"></div>
<div class="t" style="left:509.00px;top:289px;font-size:12px;line-height:12px;color:#000;transform:scaleX(0.99);transform-origin:0 0;">Формула</div>
<div class="t" style="left:558.76px;top:289px;font-size:12px;line-height:12px;color:#000;transform:scaleX(0.87);transform-origin:0 0;">...</div>
<div style="position:absolute;left:368px;top:323px;width:679px;height:196px;border:1px solid #ffffff;border-radius:3px;box-sizing:border-box;"></div>
<div style="position:absolute;left:367px;top:322px;width:679px;height:196px;border:1px solid #d5dfe5;border-radius:3px;box-sizing:border-box;"></div>
<div style="position:absolute;left:374px;top:316px;width:46.625px;height:6px;background:#f0f0f0;"></div>
<div class="t" style="left:376.00px;top:317px;font-size:12px;line-height:12px;color:#000;transform:scaleX(0.99);transform-origin:0 0;">Формат</div>
<div class="t" style="left:373.00px;top:336px;font-size:12px;line-height:12px;color:#000;transform:scaleX(0.99);transform-origin:0 0;">Имя:</div>
<div style="position:absolute;left:492px;top:332px;width:547px;height:19px;background:#fff;border:1px solid #abadb3;border-top-color:#abadb3;border-left-color:#e2e3ea;border-right-color:#dbdfe6;border-bottom-color:#e3e9ef;box-sizing:border-box;"></div>
<div class="t" style="left:495.00px;top:336px;font-size:12px;line-height:12px;color:#000;transform:scaleX(0.99);transform-origin:0 0;">att</div>
<div class="t" style="left:508.19px;top:336px;font-size:12px;line-height:12px;color:#000;transform:scaleX(0.87);transform-origin:0 0;">_1_</div>
<div class="t" style="left:525.61px;top:336px;font-size:12px;line-height:12px;color:#000;transform:scaleX(0.99);transform-origin:0 0;">поле</div>
<div class="t" style="left:373.00px;top:365px;font-size:12px;line-height:12px;color:#000;transform:scaleX(0.99);transform-origin:0 0;">Тип данных:</div>
<div style="position:absolute;left:492px;top:358px;width:202px;height:21px;background:#fff;border:1px solid #abadb3;border-left-color:#e2e3ea;border-right-color:#dbdfe6;border-bottom-color:#e3e9ef;box-sizing:border-box;"></div>
<svg style="position:absolute;left:682px;top:367px;" width="8" height="5" viewBox="0 0 8 5" shape-rendering="crispEdges"><path d="M0 0 H7 L3.5 4Z" fill="#000"/></svg>
<div class="t" style="left:494.00px;top:363px;font-size:12px;line-height:12px;color:#000;transform:scaleX(0.99);transform-origin:0 0;">Текст</div>
<div style="position:absolute;left:702px;top:357px;width:1px;height:157px;background:#a0a0a0;"></div>
<div style="position:absolute;left:492px;top:393px;width:13px;height:13px;border:1px solid #8e8f8f;box-sizing:border-box;background:linear-gradient(135deg,#dcdcdc,#fbfbfb);box-shadow:inset 0 0 0 1px #f4f4f4;"></div>
<div class="t" style="left:508.00px;top:394px;font-size:12px;line-height:12px;color:#000;transform:scaleX(0.99);transform-origin:0 0;">Скрыть при выводе</div>
<div class="t" style="left:373.00px;top:420px;font-size:12px;line-height:12px;color:#000;transform:scaleX(0.99);transform-origin:0 0;">Значение:</div>
<div style="position:absolute;left:492px;top:417px;width:206px;height:21px;background:#fff;border:1px solid #abadb3;border-left-color:#e2e3ea;border-right-color:#dbdfe6;border-bottom-color:#e3e9ef;box-sizing:border-box;"></div>
<svg style="position:absolute;left:686px;top:426px;" width="8" height="5" viewBox="0 0 8 5" shape-rendering="crispEdges"><path d="M0 0 H7 L3.5 4Z" fill="#000"/></svg>
<div class="t" style="left:373.00px;top:463px;font-size:12px;line-height:12px;color:#000;transform:scaleX(0.99);transform-origin:0 0;">Единица:</div>
<div style="position:absolute;left:492px;top:456px;width:45px;height:21px;background:#fff;border:1px solid #a8a8a8;border-radius:2px;box-sizing:border-box;"></div>
<div style="position:absolute;left:494px;top:458px;width:24px;height:17px;background:#f0f0f0;"></div>
<svg style="position:absolute;left:525px;top:465px;" width="8" height="5" viewBox="0 0 8 5" shape-rendering="crispEdges"><path d="M0 0 H7 L3.5 4Z" fill="#a4a4a4"/></svg>
<div class="t" style="left:495.00px;top:461px;font-size:12px;line-height:12px;color:#000;transform:scaleX(0.99);transform-origin:0 0;">Нет</div>
<div class="t" style="left:373.00px;top:495px;font-size:12px;line-height:12px;color:#000;transform:scaleX(0.99);transform-origin:0 0;">Десятичные цифры:</div>
<div style="position:absolute;left:492px;top:490px;width:49px;height:19px;background:#f0f0f0;border:1px solid #c8ccd4;border-top-color:#a8acb4;border-radius:2px;box-sizing:border-box;box-shadow:inset 0 0 0 1px #ffffff;"></div>
<div class="t" style="left:496.00px;top:494px;font-size:12px;line-height:12px;color:#000;transform:scaleX(0.87);transform-origin:0 0;">1</div>
<div style="position:absolute;left:542px;top:490px;width:18px;height:19px;border:1px solid #6d6d6d;box-sizing:border-box;background:#fff;"></div>
<div style="position:absolute;left:544px;top:492px;width:14px;height:7px;background:#f0f0f0;border:1px solid #c4c4c4;border-top:none;box-sizing:border-box;"></div>
<div style="position:absolute;left:544px;top:500px;width:14px;height:7px;background:#f0f0f0;border:1px solid #c4c4c4;box-sizing:border-box;"></div>
<svg style="position:absolute;left:548px;top:493px;" width="6" height="4" viewBox="0 0 6 4" shape-rendering="crispEdges"><path d="M0 3 H5 L2.5 0Z" fill="#8a8a8a"/></svg>
<svg style="position:absolute;left:548px;top:502px;" width="6" height="4" viewBox="0 0 6 4" shape-rendering="crispEdges"><path d="M0 0 H5 L2.5 3Z" fill="#8a8a8a"/></svg>
<div class="t" style="left:711.00px;top:365px;font-size:12px;line-height:12px;color:#000;transform:scaleX(0.99);transform-origin:0 0;">Порядок:</div>
<div style="position:absolute;left:769px;top:358px;width:116px;height:21px;background:#fff;border:1px solid #a8a8a8;border-radius:2px;box-sizing:border-box;"></div>
<div style="position:absolute;left:771px;top:360px;width:95px;height:17px;background:#f0f0f0;"></div>
<svg style="position:absolute;left:873px;top:366px;" width="8" height="5" viewBox="0 0 8 5" shape-rendering="crispEdges"><path d="M0 0 H7 L3.5 4Z" fill="#a4a4a4"/></svg>
<div class="t" style="left:772.00px;top:363px;font-size:12px;line-height:12px;color:#000;transform:scaleX(0.99);transform-origin:0 0;">Нет</div>
<div class="t" style="left:781.00px;top:389px;font-size:12px;line-height:12px;color:#000;transform:scaleX(0.99);transform-origin:0 0;">При объединении строк</div>
<div style="position:absolute;left:368px;top:531px;width:679px;height:69px;border:1px solid #ffffff;border-radius:3px;box-sizing:border-box;"></div>
<div style="position:absolute;left:367px;top:530px;width:679px;height:69px;border:1px solid #d5dfe5;border-radius:3px;box-sizing:border-box;"></div>
<div style="position:absolute;left:374px;top:524px;width:70.9375px;height:6px;background:#f0f0f0;"></div>
<div class="t" style="left:376.00px;top:525px;font-size:12px;line-height:12px;color:#000;transform:scaleX(0.99);transform-origin:0 0;">Компоновка</div>
<div class="t" style="left:373.00px;top:546px;font-size:12px;line-height:12px;color:#000;transform:scaleX(0.99);transform-origin:0 0;">Шрифт:</div>
<div class="t" style="left:450px;top:546px;font-size:12px;line-height:12px;color:#000;transform:scaleX(0.9222);transform-origin:0 0;">GOST 2.304 type A; 3</div>
<div style="position:absolute;left:567px;top:540px;width:31px;height:23px;border:1px solid #707070;border-radius:3px;box-sizing:border-box;background:linear-gradient(180deg,#f2f2f2 0%,#ebebeb 50%,#dddddd 51%,#cfcfcf 100%);box-shadow:inset 0 0 0 1px #fbfbfb;"></div>
<div class="t" style="left:576.00px;top:546px;font-size:12px;line-height:12px;color:#000;transform:scaleX(0.87);transform-origin:0 0;">...</div>
<div class="t" style="left:373.00px;top:577px;font-size:12px;line-height:12px;color:#000;transform:scaleX(0.99);transform-origin:0 0;">По ширине:</div>
<div style="position:absolute;left:447px;top:570px;width:65px;height:21px;background:#fff;border:1px solid #abadb3;border-left-color:#e2e3ea;border-right-color:#dbdfe6;border-bottom-color:#e3e9ef;box-sizing:border-box;"></div>
<svg style="position:absolute;left:500px;top:579px;" width="8" height="5" viewBox="0 0 8 5" shape-rendering="crispEdges"><path d="M0 0 H7 L3.5 4Z" fill="#000"/></svg>
<div class="t" style="left:450.00px;top:575px;font-size:12px;line-height:12px;color:#000;transform:scaleX(0.99);transform-origin:0 0;">Слева</div>
<div style="position:absolute;left:606px;top:539px;width:1px;height:58px;background:#a0a0a0;"></div>
<div class="t" style="left:615.00px;top:546px;font-size:12px;line-height:12px;color:#000;transform:scaleX(0.99);transform-origin:0 0;">Длина:</div>
<div style="position:absolute;left:660px;top:540px;width:43px;height:19px;background:#fff;border:1px solid #abadb3;border-top-color:#abadb3;border-left-color:#e2e3ea;border-right-color:#dbdfe6;border-bottom-color:#e3e9ef;box-sizing:border-box;border-radius:2px;"></div>
<div class="t" style="left:665.00px;top:544px;font-size:12px;line-height:12px;color:#000;transform:scaleX(0.87);transform-origin:0 0;">20</div>
<div style="position:absolute;left:703px;top:540px;width:18px;height:19px;border:1px solid #6d6d6d;box-sizing:border-box;background:#fff;"></div>
<div style="position:absolute;left:705px;top:542px;width:14px;height:7px;background:#eef0f4;border:1px solid #c4c4c4;border-top:none;box-sizing:border-box;"></div>
<div style="position:absolute;left:705px;top:550px;width:14px;height:7px;background:#eef0f4;border:1px solid #c4c4c4;box-sizing:border-box;"></div>
<svg style="position:absolute;left:709px;top:543px;" width="7" height="4" viewBox="0 0 7 4" shape-rendering="crispEdges"><path d="M0 3.5 H6 L3 0Z" fill="#4a5ab0"/></svg>
<svg style="position:absolute;left:709px;top:552px;" width="7" height="4" viewBox="0 0 7 4" shape-rendering="crispEdges"><path d="M0 0 H6 L3 3.5Z" fill="#4a5ab0"/></svg>
<div class="t" style="left:615.00px;top:577px;font-size:12px;line-height:12px;color:#000;transform:scaleX(0.99);transform-origin:0 0;">Угол:</div>
<div style="position:absolute;left:660px;top:569px;width:39px;height:19px;background:#fff;border:1px solid #abadb3;border-top-color:#abadb3;border-left-color:#e2e3ea;border-right-color:#dbdfe6;border-bottom-color:#e3e9ef;box-sizing:border-box;border-radius:2px;"></div>
<div class="t" style="left:665.00px;top:573px;font-size:12px;line-height:12px;color:#000;transform:scaleX(0.87);transform-origin:0 0;">0.00</div>
<div class="t" style="left:706.00px;top:577px;font-size:12px;line-height:12px;color:#000;transform:scaleX(0.99);transform-origin:0 0;">гр</div>
<div style="position:absolute;left:364px;top:612px;width:13px;height:13px;border:1px solid #8e8f8f;box-sizing:border-box;background:linear-gradient(135deg,#dcdcdc,#fbfbfb);box-shadow:inset 0 0 0 1px #f4f4f4;"></div>
<div class="t" style="left:380.00px;top:613px;font-size:12px;line-height:12px;color:#000;transform:scaleX(0.99);transform-origin:0 0;">Задать как значение по умолчанию для новых полей значений</div>
<div style="position:absolute;left:362px;top:633px;width:689px;height:1px;background:#a0a0a0;"></div>
<div style="position:absolute;left:362px;top:634px;width:689px;height:1px;background:#ffffff;"></div>
<div style="position:absolute;left:714px;top:393px;width:600px;height:370px;background:linear-gradient(100deg,#a6dada 0%,#9cd3d4 12%,#acdfdf 25%,#98d0d1 40%,#9fd5d6 60%,#a2d8d9 80%,#a8dcdc 100%);border:1px solid #3d5a5a;border-radius:7px 0 0 0;box-sizing:border-box;box-shadow:-2px 2px 9px rgba(0,0,0,0.45);"></div>
<div style="position:absolute;left:715px;top:394px;width:591px;height:1px;background:rgba(255,255,255,0.5);"></div>
<div class="t" style="left:722.00px;top:402px;font-size:12px;line-height:12px;color:#000;transform:scaleX(0.99);transform-origin:0 0;">Выбрать атрибут [СБОРКА]</div>
<div style="position:absolute;left:721px;top:422px;width:590px;height:330px;background:#f0f0f0;border:1px solid #46686a;box-sizing:border-box;"></div>
<div style="position:absolute;left:728px;top:430px;width:590px;height:330px;border:1px solid #d5dfe5;border-radius:3px;box-sizing:border-box;"></div>
<div style="position:absolute;left:734px;top:424px;width:57.34375px;height:6px;background:#f0f0f0;"></div>
<div class="t" style="left:736.00px;top:425px;font-size:12px;line-height:12px;color:#000;transform:scaleX(0.99);transform-origin:0 0;">Атрибуты</div>
<div style="position:absolute;left:731px;top:439px;width:580px;height:320px;background:#fff;border-top:1px solid #a0a0a0;border-left:1px solid #a0a0a0;box-sizing:border-box;box-shadow:inset 1px 1px 0 #696969;"></div>
<svg style="position:absolute;left:740px;top:447px;" width="9" height="9" viewBox="0 0 9 9" shape-rendering="crispEdges"><defs><linearGradient id="tbg" x1="0" y1="0" x2="0" y2="1"><stop offset="0" stop-color="#ffffff"/><stop offset="1" stop-color="#d8d8d8"/></linearGradient></defs><rect x="0.5" y="0.5" width="8" height="8" rx="1.5" fill="url(#tbg)" stroke="#9a9a9a"/><path d="M2 4.5 H7" stroke="#3050a8"/></svg>
<div style="position:absolute;left:750px;top:451px;width:1px;height:1px;background:#888;"></div>
<div style="position:absolute;left:752px;top:451px;width:1px;height:1px;background:#888;"></div>
<div style="position:absolute;left:754px;top:451px;width:1px;height:1px;background:#888;"></div>
<svg style="position:absolute;left:756px;top:444px;" width="14" height="11" viewBox="0 0 14 11" shape-rendering="crispEdges"><path d="M0.5 2.5 H13.5 V10.5 H0.5Z" fill="#808000" stroke="#6a6a6a"/><rect x="1" y="3" width="12" height="1" fill="#fff"/><path d="M1.5 2.5 V1.5 Q1.5 0.5 2.5 0.5 H7.5 L8.5 2.5" fill="#fff" stroke="#6a6a6a"/><rect x="4" y="1" width="4" height="1" fill="#808000"/></svg>
<div class="t" style="left:776.00px;top:444px;font-size:12px;line-height:12px;color:#000;transform:scaleX(0.99);transform-origin:0 0;">Атрибут [СБОРКА]</div>
<div style="position:absolute;left:764px;top:459px;width:1px;height:1px;background:#888;"></div>
<div style="position:absolute;left:764px;top:461px;width:1px;height:1px;background:#888;"></div>
<div style="position:absolute;left:764px;top:463px;width:1px;height:1px;background:#888;"></div>
<div style="position:absolute;left:764px;top:465px;width:1px;height:1px;background:#888;"></div>
<div style="position:absolute;left:764px;top:467px;width:1px;height:1px;background:#888;"></div>
<div style="position:absolute;left:764px;top:469px;width:1px;height:1px;background:#888;"></div>
<div style="position:absolute;left:764px;top:471px;width:1px;height:1px;background:#888;"></div>
<div style="position:absolute;left:764px;top:473px;width:1px;height:1px;background:#888;"></div>
<div style="position:absolute;left:764px;top:475px;width:1px;height:1px;background:#888;"></div>
<div style="position:absolute;left:764px;top:477px;width:1px;height:1px;background:#888;"></div>
<div style="position:absolute;left:764px;top:479px;width:1px;height:1px;background:#888;"></div>
<div style="position:absolute;left:764px;top:481px;width:1px;height:1px;background:#888;"></div>
<div style="position:absolute;left:764px;top:483px;width:1px;height:1px;background:#888;"></div>
<div style="position:absolute;left:764px;top:485px;width:1px;height:1px;background:#888;"></div>
<div style="position:absolute;left:764px;top:487px;width:1px;height:1px;background:#888;"></div>
<div style="position:absolute;left:764px;top:489px;width:1px;height:1px;background:#888;"></div>
<div style="position:absolute;left:764px;top:491px;width:1px;height:1px;background:#888;"></div>
<div style="position:absolute;left:764px;top:493px;width:1px;height:1px;background:#888;"></div>
<div style="position:absolute;left:764px;top:495px;width:1px;height:1px;background:#888;"></div>
<div style="position:absolute;left:764px;top:497px;width:1px;height:1px;background:#888;"></div>
<div style="position:absolute;left:764px;top:499px;width:1px;height:1px;background:#888;"></div>
<div style="position:absolute;left:764px;top:501px;width:1px;height:1px;background:#888;"></div>
<div style="position:absolute;left:764px;top:503px;width:1px;height:1px;background:#888;"></div>
<div style="position:absolute;left:764px;top:505px;width:1px;height:1px;background:#888;"></div>
<div style="position:absolute;left:764px;top:507px;width:1px;height:1px;background:#888;"></div>
<div style="position:absolute;left:764px;top:509px;width:1px;height:1px;background:#888;"></div>
<div style="position:absolute;left:764px;top:511px;width:1px;height:1px;background:#888;"></div>
<div style="position:absolute;left:764px;top:513px;width:1px;height:1px;background:#888;"></div>
<div style="position:absolute;left:764px;top:515px;width:1px;height:1px;background:#888;"></div>
<div style="position:absolute;left:764px;top:517px;width:1px;height:1px;background:#888;"></div>
<div style="position:absolute;left:764px;top:519px;width:1px;height:1px;background:#888;"></div>
<div style="position:absolute;left:764px;top:521px;width:1px;height:1px;background:#888;"></div>
<div style="position:absolute;left:764px;top:523px;width:1px;height:1px;background:#888;"></div>
<div style="position:absolute;left:764px;top:525px;width:1px;height:1px;background:#888;"></div>
<div style="position:absolute;left:764px;top:527px;width:1px;height:1px;background:#888;"></div>
<div style="position:absolute;left:764px;top:529px;width:1px;height:1px;background:#888;"></div>
<div style="position:absolute;left:764px;top:531px;width:1px;height:1px;background:#888;"></div>
<div style="position:absolute;left:764px;top:533px;width:1px;height:1px;background:#888;"></div>
<div style="position:absolute;left:764px;top:535px;width:1px;height:1px;background:#888;"></div>
<div style="position:absolute;left:764px;top:537px;width:1px;height:1px;background:#888;"></div>
<div style="position:absolute;left:764px;top:539px;width:1px;height:1px;background:#888;"></div>
<div style="position:absolute;left:764px;top:541px;width:1px;height:1px;background:#888;"></div>
<div style="position:absolute;left:764px;top:543px;width:1px;height:1px;background:#888;"></div>
<div style="position:absolute;left:764px;top:545px;width:1px;height:1px;background:#888;"></div>
<div style="position:absolute;left:764px;top:547px;width:1px;height:1px;background:#888;"></div>
<div style="position:absolute;left:764px;top:549px;width:1px;height:1px;background:#888;"></div>
<div style="position:absolute;left:764px;top:551px;width:1px;height:1px;background:#888;"></div>
<div style="position:absolute;left:764px;top:553px;width:1px;height:1px;background:#888;"></div>
<div style="position:absolute;left:764px;top:555px;width:1px;height:1px;background:#888;"></div>
<div style="position:absolute;left:764px;top:557px;width:1px;height:1px;background:#888;"></div>
<div style="position:absolute;left:764px;top:559px;width:1px;height:1px;background:#888;"></div>
<div style="position:absolute;left:764px;top:561px;width:1px;height:1px;background:#888;"></div>
<div style="position:absolute;left:764px;top:563px;width:1px;height:1px;background:#888;"></div>
<div style="position:absolute;left:764px;top:565px;width:1px;height:1px;background:#888;"></div>
<div style="position:absolute;left:764px;top:567px;width:1px;height:1px;background:#888;"></div>
<div style="position:absolute;left:764px;top:569px;width:1px;height:1px;background:#888;"></div>
<div style="position:absolute;left:764px;top:571px;width:1px;height:1px;background:#888;"></div>
<div style="position:absolute;left:764px;top:573px;width:1px;height:1px;background:#888;"></div>
<div style="position:absolute;left:764px;top:575px;width:1px;height:1px;background:#888;"></div>
<div style="position:absolute;left:764px;top:577px;width:1px;height:1px;background:#888;"></div>
<div style="position:absolute;left:764px;top:579px;width:1px;height:1px;background:#888;"></div>
<div style="position:absolute;left:764px;top:581px;width:1px;height:1px;background:#888;"></div>
<div style="position:absolute;left:764px;top:583px;width:1px;height:1px;background:#888;"></div>
<div style="position:absolute;left:764px;top:585px;width:1px;height:1px;background:#888;"></div>
<div style="position:absolute;left:764px;top:587px;width:1px;height:1px;background:#888;"></div>
<div style="position:absolute;left:764px;top:589px;width:1px;height:1px;background:#888;"></div>
<div style="position:absolute;left:764px;top:591px;width:1px;height:1px;background:#888;"></div>
<div style="position:absolute;left:764px;top:593px;width:1px;height:1px;background:#888;"></div>
<div style="position:absolute;left:764px;top:595px;width:1px;height:1px;background:#888;"></div>
<div style="position:absolute;left:764px;top:597px;width:1px;height:1px;background:#888;"></div>
<div style="position:absolute;left:764px;top:599px;width:1px;height:1px;background:#888;"></div>
<div style="position:absolute;left:764px;top:601px;width:1px;height:1px;background:#888;"></div>
<div style="position:absolute;left:764px;top:603px;width:1px;height:1px;background:#888;"></div>
<div style="position:absolute;left:764px;top:605px;width:1px;height:1px;background:#888;"></div>
<div style="position:absolute;left:764px;top:607px;width:1px;height:1px;background:#888;"></div>
<div style="position:absolute;left:764px;top:609px;width:1px;height:1px;background:#888;"></div>
<div style="position:absolute;left:764px;top:611px;width:1px;height:1px;background:#888;"></div>
<div style="position:absolute;left:764px;top:613px;width:1px;height:1px;background:#888;"></div>
<div style="position:absolute;left:764px;top:615px;width:1px;height:1px;background:#888;"></div>
<div style="position:absolute;left:764px;top:617px;width:1px;height:1px;background:#888;"></div>
<div style="position:absolute;left:764px;top:619px;width:1px;height:1px;background:#888;"></div>
<div style="position:absolute;left:764px;top:621px;width:1px;height:1px;background:#888;"></div>
<div style="position:absolute;left:764px;top:623px;width:1px;height:1px;background:#888;"></div>
<div style="position:absolute;left:764px;top:625px;width:1px;height:1px;background:#888;"></div>
<div style="position:absolute;left:764px;top:627px;width:1px;height:1px;background:#888;"></div>
<div style="position:absolute;left:764px;top:629px;width:1px;height:1px;background:#888;"></div>
<div style="position:absolute;left:764px;top:631px;width:1px;height:1px;background:#888;"></div>
<div style="position:absolute;left:764px;top:633px;width:1px;height:1px;background:#888;"></div>
<div style="position:absolute;left:764px;top:635px;width:1px;height:1px;background:#888;"></div>
<div style="position:absolute;left:764px;top:637px;width:1px;height:1px;background:#888;"></div>
<div style="position:absolute;left:764px;top:639px;width:1px;height:1px;background:#888;"></div>
<div style="position:absolute;left:764px;top:641px;width:1px;height:1px;background:#888;"></div>
<div style="position:absolute;left:764px;top:643px;width:1px;height:1px;background:#888;"></div>
<div style="position:absolute;left:764px;top:645px;width:1px;height:1px;background:#888;"></div>
<div style="position:absolute;left:764px;top:647px;width:1px;height:1px;background:#888;"></div>
<div style="position:absolute;left:764px;top:649px;width:1px;height:1px;background:#888;"></div>
<div style="position:absolute;left:764px;top:651px;width:1px;height:1px;background:#888;"></div>
<div style="position:absolute;left:764px;top:653px;width:1px;height:1px;background:#888;"></div>
<div style="position:absolute;left:764px;top:655px;width:1px;height:1px;background:#888;"></div>
<div style="position:absolute;left:764px;top:657px;width:1px;height:1px;background:#888;"></div>
<div style="position:absolute;left:764px;top:659px;width:1px;height:1px;background:#888;"></div>
<div style="position:absolute;left:764px;top:661px;width:1px;height:1px;background:#888;"></div>
<div style="position:absolute;left:764px;top:663px;width:1px;height:1px;background:#888;"></div>
<div style="position:absolute;left:764px;top:665px;width:1px;height:1px;background:#888;"></div>
<div style="position:absolute;left:764px;top:667px;width:1px;height:1px;background:#888;"></div>
<div style="position:absolute;left:764px;top:669px;width:1px;height:1px;background:#888;"></div>
<div style="position:absolute;left:764px;top:671px;width:1px;height:1px;background:#888;"></div>
<div style="position:absolute;left:764px;top:673px;width:1px;height:1px;background:#888;"></div>
<div style="position:absolute;left:764px;top:675px;width:1px;height:1px;background:#888;"></div>
<div style="position:absolute;left:764px;top:677px;width:1px;height:1px;background:#888;"></div>
<div style="position:absolute;left:764px;top:679px;width:1px;height:1px;background:#888;"></div>
<div style="position:absolute;left:764px;top:681px;width:1px;height:1px;background:#888;"></div>
<div style="position:absolute;left:764px;top:683px;width:1px;height:1px;background:#888;"></div>
<div style="position:absolute;left:764px;top:685px;width:1px;height:1px;background:#888;"></div>
<div style="position:absolute;left:764px;top:687px;width:1px;height:1px;background:#888;"></div>
<div style="position:absolute;left:764px;top:689px;width:1px;height:1px;background:#888;"></div>
<div style="position:absolute;left:764px;top:691px;width:1px;height:1px;background:#888;"></div>
<div style="position:absolute;left:764px;top:693px;width:1px;height:1px;background:#888;"></div>
<div style="position:absolute;left:764px;top:695px;width:1px;height:1px;background:#888;"></div>
<div style="position:absolute;left:764px;top:697px;width:1px;height:1px;background:#888;"></div>
<div style="position:absolute;left:764px;top:699px;width:1px;height:1px;background:#888;"></div>
<div style="position:absolute;left:764px;top:701px;width:1px;height:1px;background:#888;"></div>
<div style="position:absolute;left:764px;top:703px;width:1px;height:1px;background:#888;"></div>
<div style="position:absolute;left:764px;top:705px;width:1px;height:1px;background:#888;"></div>
<div style="position:absolute;left:764px;top:707px;width:1px;height:1px;background:#888;"></div>
<div style="position:absolute;left:764px;top:709px;width:1px;height:1px;background:#888;"></div>
<div style="position:absolute;left:764px;top:711px;width:1px;height:1px;background:#888;"></div>
<div style="position:absolute;left:764px;top:713px;width:1px;height:1px;background:#888;"></div>
<div style="position:absolute;left:764px;top:715px;width:1px;height:1px;background:#888;"></div>
<div style="position:absolute;left:764px;top:717px;width:1px;height:1px;background:#888;"></div>
<div style="position:absolute;left:764px;top:719px;width:1px;height:1px;background:#888;"></div>
<div style="position:absolute;left:764px;top:721px;width:1px;height:1px;background:#888;"></div>
<div style="position:absolute;left:764px;top:723px;width:1px;height:1px;background:#888;"></div>
<div style="position:absolute;left:764px;top:725px;width:1px;height:1px;background:#888;"></div>
<div style="position:absolute;left:764px;top:727px;width:1px;height:1px;background:#888;"></div>
<div style="position:absolute;left:764px;top:729px;width:1px;height:1px;background:#888;"></div>
<div style="position:absolute;left:764px;top:731px;width:1px;height:1px;background:#888;"></div>
<div style="position:absolute;left:764px;top:733px;width:1px;height:1px;background:#888;"></div>
<div style="position:absolute;left:764px;top:735px;width:1px;height:1px;background:#888;"></div>
<div style="position:absolute;left:764px;top:737px;width:1px;height:1px;background:#888;"></div>
<div style="position:absolute;left:764px;top:739px;width:1px;height:1px;background:#888;"></div>
<div style="position:absolute;left:764px;top:741px;width:1px;height:1px;background:#888;"></div>
<div style="position:absolute;left:764px;top:743px;width:1px;height:1px;background:#888;"></div>
<div style="position:absolute;left:764px;top:745px;width:1px;height:1px;background:#888;"></div>
<div style="position:absolute;left:764px;top:747px;width:1px;height:1px;background:#888;"></div>
<div style="position:absolute;left:764px;top:749px;width:1px;height:1px;background:#888;"></div>
<div style="position:absolute;left:765px;top:469px;width:1px;height:1px;background:#888;"></div>
<div style="position:absolute;left:767px;top:469px;width:1px;height:1px;background:#888;"></div>
<div style="position:absolute;left:769px;top:469px;width:1px;height:1px;background:#888;"></div>
<div style="position:absolute;left:771px;top:469px;width:1px;height:1px;background:#888;"></div>
<div style="position:absolute;left:773px;top:469px;width:1px;height:1px;background:#888;"></div>
<div style="position:absolute;left:793px;top:459px;width:30px;height:18px;background:#ececec;"></div>
<svg style="position:absolute;left:776px;top:461px;" width="12" height="15" viewBox="0 0 12 15" shape-rendering="crispEdges"><path d="M0.5 0.5 H8.5 L11.5 3.5 V14.5 H0.5Z" fill="#fff" stroke="#222"/><path d="M8.5 0.5 V3.5 H11.5" fill="#fff" stroke="#222"/><path d="M2 4.5H7M2 6.5H9M2 8.5H9M2 10.5H9M2 12.5H9" stroke="#9a9a9a"/><rect x="11" y="14" width="1" height="1" fill="#000"/></svg>
<div class="t" style="left:795.00px;top:462px;font-size:12px;line-height:12px;color:#000;transform:scaleX(0.99);transform-origin:0 0;">att</div>
<div class="t" style="left:808.19px;top:462px;font-size:12px;line-height:12px;color:#000;transform:scaleX(0.87);transform-origin:0 0;">_1</div>
<div style="position:absolute;left:765px;top:487px;width:1px;height:1px;background:#888;"></div>
<div style="position:absolute;left:767px;top:487px;width:1px;height:1px;background:#888;"></div>
<div style="position:absolute;left:769px;top:487px;width:1px;height:1px;background:#888;"></div>
<div style="position:absolute;left:771px;top:487px;width:1px;height:1px;background:#888;"></div>
<div style="position:absolute;left:773px;top:487px;width:1px;height:1px;background:#888;"></div>
<svg style="position:absolute;left:776px;top:479px;" width="12" height="15" viewBox="0 0 12 15" shape-rendering="crispEdges"><path d="M0.5 0.5 H8.5 L11.5 3.5 V14.5 H0.5Z" fill="#fff" stroke="#222"/><path d="M8.5 0.5 V3.5 H11.5" fill="#fff" stroke="#222"/><path d="M2 4.5H7M2 6.5H9M2 8.5H9M2 10.5H9M2 12.5H9" stroke="#9a9a9a"/><rect x="11" y="14" width="1" height="1" fill="#000"/></svg>
<div class="t" style="left:795.00px;top:480px;font-size:12px;line-height:12px;color:#000;transform:scaleX(0.99);transform-origin:0 0;">att</div>
<div class="t" style="left:808.19px;top:480px;font-size:12px;line-height:12px;color:#000;transform:scaleX(0.87);transform-origin:0 0;">_2</div>
<div style="position:absolute;left:765px;top:505px;width:1px;height:1px;background:#888;"></div>
<div style="position:absolute;left:767px;top:505px;width:1px;height:1px;background:#888;"></div>
<div style="position:absolute;left:769px;top:505px;width:1px;height:1px;background:#888;"></div>
<div style="position:absolute;left:771px;top:505px;width:1px;height:1px;background:#888;"></div>
<div style="position:absolute;left:773px;top:505px;width:1px;height:1px;background:#888;"></div>
<svg style="position:absolute;left:776px;top:497px;" width="12" height="15" viewBox="0 0 12 15" shape-rendering="crispEdges"><path d="M0.5 0.5 H8.5 L11.5 3.5 V14.5 H0.5Z" fill="#fff" stroke="#222"/><path d="M8.5 0.5 V3.5 H11.5" fill="#fff" stroke="#222"/><path d="M2 4.5H7M2 6.5H9M2 8.5H9M2 10.5H9M2 12.5H9" stroke="#9a9a9a"/><rect x="11" y="14" width="1" height="1" fill="#000"/></svg>
<div class="t" style="left:795.00px;top:498px;font-size:12px;line-height:12px;color:#000;transform:scaleX(0.99);transform-origin:0 0;">att</div>
<div class="t" style="left:808.19px;top:498px;font-size:12px;line-height:12px;color:#000;transform:scaleX(0.87);transform-origin:0 0;">_3</div>
<div style="position:absolute;left:765px;top:523px;width:1px;height:1px;background:#888;"></div>
<div style="position:absolute;left:767px;top:523px;width:1px;height:1px;background:#888;"></div>
<div style="position:absolute;left:769px;top:523px;width:1px;height:1px;background:#888;"></div>
<div style="position:absolute;left:771px;top:523px;width:1px;height:1px;background:#888;"></div>
<div style="position:absolute;left:773px;top:523px;width:1px;height:1px;background:#888;"></div>
<svg style="position:absolute;left:776px;top:515px;" width="12" height="15" viewBox="0 0 12 15" shape-rendering="crispEdges"><path d="M0.5 0.5 H8.5 L11.5 3.5 V14.5 H0.5Z" fill="#fff" stroke="#222"/><path d="M8.5 0.5 V3.5 H11.5" fill="#fff" stroke="#222"/><path d="M2 4.5H7M2 6.5H9M2 8.5H9M2 10.5H9M2 12.5H9" stroke="#9a9a9a"/><rect x="11" y="14" width="1" height="1" fill="#000"/></svg>
<div class="t" style="left:795.00px;top:516px;font-size:12px;line-height:12px;color:#000;transform:scaleX(0.99);transform-origin:0 0;">att</div>
<div class="t" style="left:808.19px;top:516px;font-size:12px;line-height:12px;color:#000;transform:scaleX(0.87);transform-origin:0 0;">_4</div>
<div style="position:absolute;left:765px;top:541px;width:1px;height:1px;background:#888;"></div>
<div style="position:absolute;left:767px;top:541px;width:1px;height:1px;background:#888;"></div>
<div style="position:absolute;left:769px;top:541px;width:1px;height:1px;background:#888;"></div>
<div style="position:absolute;left:771px;top:541px;width:1px;height:1px;background:#888;"></div>
<div style="position:absolute;left:773px;top:541px;width:1px;height:1px;background:#888;"></div>
<svg style="position:absolute;left:776px;top:533px;" width="12" height="15" viewBox="0 0 12 15" shape-rendering="crispEdges"><path d="M0.5 0.5 H8.5 L11.5 3.5 V14.5 H0.5Z" fill="#fff" stroke="#222"/><path d="M8.5 0.5 V3.5 H11.5" fill="#fff" stroke="#222"/><path d="M2 4.5H7M2 6.5H9M2 8.5H9M2 10.5H9M2 12.5H9" stroke="#9a9a9a"/><rect x="11" y="14" width="1" height="1" fill="#000"/></svg>
<div class="t" style="left:795.00px;top:534px;font-size:12px;line-height:12px;color:#000;transform:scaleX(0.87);transform-origin:0 0;">AREA</div>
<div class="t" style="left:823.42px;top:534px;font-size:12px;line-height:12px;color:#000;transform:scaleX(0.99);transform-origin:0 0;">  -  Площадь</div>
<div style="position:absolute;left:765px;top:559px;width:1px;height:1px;background:#888;"></div>
<div style="position:absolute;left:767px;top:559px;width:1px;height:1px;background:#888;"></div>
<div style="position:absolute;left:769px;top:559px;width:1px;height:1px;background:#888;"></div>
<div style="position:absolute;left:771px;top:559px;width:1px;height:1px;background:#888;"></div>
<div style="position:absolute;left:773px;top:559px;width:1px;height:1px;background:#888;"></div>
<svg style="position:absolute;left:776px;top:551px;" width="12" height="15" viewBox="0 0 12 15" shape-rendering="crispEdges"><path d="M0.5 0.5 H8.5 L11.5 3.5 V14.5 H0.5Z" fill="#fff" stroke="#222"/><path d="M8.5 0.5 V3.5 H11.5" fill="#fff" stroke="#222"/><path d="M2 4.5H7M2 6.5H9M2 8.5H9M2 10.5H9M2 12.5H9" stroke="#9a9a9a"/><rect x="11" y="14" width="1" height="1" fill="#000"/></svg>
<div class="t" style="left:795.00px;top:552px;font-size:12px;line-height:12px;color:#000;transform:scaleX(0.87);transform-origin:0 0;">AREA_PLAN</div>
<div class="t" style="left:856.50px;top:552px;font-size:12px;line-height:12px;color:#000;transform:scaleX(0.99);transform-origin:0 0;">  -  Общая площадь внешней поверхности</div>
<div style="position:absolute;left:765px;top:577px;width:1px;height:1px;background:#888;"></div>
<div style="position:absolute;left:767px;top:577px;width:1px;height:1px;background:#888;"></div>
<div style="position:absolute;left:769px;top:577px;width:1px;height:1px;background:#888;"></div>
<div style="position:absolute;left:771px;top:577px;width:1px;height:1px;background:#888;"></div>
<div style="position:absolute;left:773px;top:577px;width:1px;height:1px;background:#888;"></div>
<svg style="position:absolute;left:776px;top:569px;" width="12" height="15" viewBox="0 0 12 15" shape-rendering="crispEdges"><path d="M0.5 0.5 H8.5 L11.5 3.5 V14.5 H0.5Z" fill="#fff" stroke="#222"/><path d="M8.5 0.5 V3.5 H11.5" fill="#fff" stroke="#222"/><path d="M2 4.5H7M2 6.5H9M2 8.5H9M2 10.5H9M2 12.5H9" stroke="#9a9a9a"/><rect x="11" y="14" width="1" height="1" fill="#000"/></svg>
<div class="t" style="left:795.00px;top:570px;font-size:12px;line-height:12px;color:#000;transform:scaleX(0.87);transform-origin:0 0;">AREA_PROJECTION_GXY_NET</div>
<div class="t" style="left:951.03px;top:570px;font-size:12px;line-height:12px;color:#000;transform:scaleX(0.99);transform-origin:0 0;">  -  Площадь «тени» детали на глобальной плоскости </div>
<div class="t" style="left:1249.56px;top:570px;font-size:12px;line-height:12px;color:#000;transform:scaleX(0.87);transform-origin:0 0;">XY</div>
<div style="position:absolute;left:765px;top:595px;width:1px;height:1px;background:#888;"></div>
<div style="position:absolute;left:767px;top:595px;width:1px;height:1px;background:#888;"></div>
<div style="position:absolute;left:769px;top:595px;width:1px;height:1px;background:#888;"></div>
<div style="position:absolute;left:771px;top:595px;width:1px;height:1px;background:#888;"></div>
<div style="position:absolute;left:773px;top:595px;width:1px;height:1px;background:#888;"></div>
<svg style="position:absolute;left:776px;top:587px;" width="12" height="15" viewBox="0 0 12 15" shape-rendering="crispEdges"><path d="M0.5 0.5 H8.5 L11.5 3.5 V14.5 H0.5Z" fill="#fff" stroke="#222"/><path d="M8.5 0.5 V3.5 H11.5" fill="#fff" stroke="#222"/><path d="M2 4.5H7M2 6.5H9M2 8.5H9M2 10.5H9M2 12.5H9" stroke="#9a9a9a"/><rect x="11" y="14" width="1" height="1" fill="#000"/></svg>
<div class="t" style="left:795.00px;top:588px;font-size:12px;line-height:12px;color:#000;transform:scaleX(0.87);transform-origin:0 0;">AREA_PROJECTION_GXZ_NET</div>
<div class="t" style="left:950.44px;top:588px;font-size:12px;line-height:12px;color:#000;transform:scaleX(0.99);transform-origin:0 0;">  -  Площадь «тени» детали на глобальной плоскости </div>
<div class="t" style="left:1248.98px;top:588px;font-size:12px;line-height:12px;color:#000;transform:scaleX(0.87);transform-origin:0 0;">XZ</div>
<div style="position:absolute;left:765px;top:613px;width:1px;height:1px;background:#888;"></div>
<div style="position:absolute;left:767px;top:613px;width:1px;height:1px;background:#888;"></div>
<div style="position:absolute;left:769px;top:613px;width:1px;height:1px;background:#888;"></div>
<div style="position:absolute;left:771px;top:613px;width:1px;height:1px;background:#888;"></div>
<div style="position:absolute;left:773px;top:613px;width:1px;height:1px;background:#888;"></div>
<svg style="position:absolute;left:776px;top:605px;" width="12" height="15" viewBox="0 0 12 15" shape-rendering="crispEdges"><path d="M0.5 0.5 H8.5 L11.5 3.5 V14.5 H0.5Z" fill="#fff" stroke="#222"/><path d="M8.5 0.5 V3.5 H11.5" fill="#fff" stroke="#222"/><path d="M2 4.5H7M2 6.5H9M2 8.5H9M2 10.5H9M2 12.5H9" stroke="#9a9a9a"/><rect x="11" y="14" width="1" height="1" fill="#000"/></svg>
<div class="t" style="left:795.00px;top:606px;font-size:12px;line-height:12px;color:#000;transform:scaleX(0.87);transform-origin:0 0;">AREA_PROJECTION_GYZ_NET</div>
<div class="t" style="left:950.44px;top:606px;font-size:12px;line-height:12px;color:#000;transform:scaleX(0.99);transform-origin:0 0;">  -  Площадь «тени» детали на глобальной плоскости </div>
<div class="t" style="left:1248.98px;top:606px;font-size:12px;line-height:12px;color:#000;transform:scaleX(0.87);transform-origin:0 0;">YZ</div>
<div style="position:absolute;left:765px;top:631px;width:1px;height:1px;background:#888;"></div>
<div style="position:absolute;left:767px;top:631px;width:1px;height:1px;background:#888;"></div>
<div style="position:absolute;left:769px;top:631px;width:1px;height:1px;background:#888;"></div>
<div style="position:absolute;left:771px;top:631px;width:1px;height:1px;background:#888;"></div>
<div style="position:absolute;left:773px;top:631px;width:1px;height:1px;background:#888;"></div>
<svg style="position:absolute;left:776px;top:623px;" width="12" height="15" viewBox="0 0 12 15" shape-rendering="crispEdges"><path d="M0.5 0.5 H8.5 L11.5 3.5 V14.5 H0.5Z" fill="#fff" stroke="#222"/><path d="M8.5 0.5 V3.5 H11.5" fill="#fff" stroke="#222"/><path d="M2 4.5H7M2 6.5H9M2 8.5H9M2 10.5H9M2 12.5H9" stroke="#9a9a9a"/><rect x="11" y="14" width="1" height="1" fill="#000"/></svg>
<div class="t" style="left:795.00px;top:624px;font-size:12px;line-height:12px;color:#000;transform:scaleX(0.87);transform-origin:0 0;">AREA_PROJECTION_GXY_GROSS</div>
<div class="t" style="left:967.84px;top:624px;font-size:12px;line-height:12px;color:#000;transform:scaleX(0.99);transform-origin:0 0;">  -  Площадь «тени» детали на глобальной плоскости </div>
<div class="t" style="left:1266.38px;top:624px;font-size:12px;line-height:12px;color:#000;transform:scaleX(0.87);transform-origin:0 0;">XY</div>
<div style="position:absolute;left:765px;top:649px;width:1px;height:1px;background:#888;"></div>
<div style="position:absolute;left:767px;top:649px;width:1px;height:1px;background:#888;"></div>
<div style="position:absolute;left:769px;top:649px;width:1px;height:1px;background:#888;"></div>
<div style="position:absolute;left:771px;top:649px;width:1px;height:1px;background:#888;"></div>
<div style="position:absolute;left:773px;top:649px;width:1px;height:1px;background:#888;"></div>
<svg style="position:absolute;left:776px;top:641px;" width="12" height="15" viewBox="0 0 12 15" shape-rendering="crispEdges"><path d="M0.5 0.5 H8.5 L11.5 3.5 V14.5 H0.5Z" fill="#fff" stroke="#222"/><path d="M8.5 0.5 V3.5 H11.5" fill="#fff" stroke="#222"/><path d="M2 4.5H7M2 6.5H9M2 8.5H9M2 10.5H9M2 12.5H9" stroke="#9a9a9a"/><rect x="11" y="14" width="1" height="1" fill="#000"/></svg>
<div class="t" style="left:795.00px;top:642px;font-size:12px;line-height:12px;color:#000;transform:scaleX(0.87);transform-origin:0 0;">AREA_PROJECTION_GXZ_GROSS</div>
<div class="t" style="left:967.26px;top:642px;font-size:12px;line-height:12px;color:#000;transform:scaleX(0.99);transform-origin:0 0;">  -  Площадь «тени» детали на глобальной плоскости </div>
<div class="t" style="left:1265.79px;top:642px;font-size:12px;line-height:12px;color:#000;transform:scaleX(0.87);transform-origin:0 0;">XZ</div>
<div style="position:absolute;left:765px;top:667px;width:1px;height:1px;background:#888;"></div>
<div style="position:absolute;left:767px;top:667px;width:1px;height:1px;background:#888;"></div>
<div style="position:absolute;left:769px;top:667px;width:1px;height:1px;background:#888;"></div>
<div style="position:absolute;left:771px;top:667px;width:1px;height:1px;background:#888;"></div>
<div style="position:absolute;left:773px;top:667px;width:1px;height:1px;background:#888;"></div>
<svg style="position:absolute;left:776px;top:659px;" width="12" height="15" viewBox="0 0 12 15" shape-rendering="crispEdges"><path d="M0.5 0.5 H8.5 L11.5 3.5 V14.5 H0.5Z" fill="#fff" stroke="#222"/><path d="M8.5 0.5 V3.5 H11.5" fill="#fff" stroke="#222"/><path d="M2 4.5H7M2 6.5H9M2 8.5H9M2 10.5H9M2 12.5H9" stroke="#9a9a9a"/><rect x="11" y="14" width="1" height="1" fill="#000"/></svg>
<div class="t" style="left:795.00px;top:660px;font-size:12px;line-height:12px;color:#000;transform:scaleX(0.87);transform-origin:0 0;">AREA_PROJECTION_GYZ_GROSS</div>
<div class="t" style="left:967.26px;top:660px;font-size:12px;line-height:12px;color:#000;transform:scaleX(0.99);transform-origin:0 0;">  -  Площадь «тени» детали на глобальной плоскости </div>
<div class="t" style="left:1265.79px;top:660px;font-size:12px;line-height:12px;color:#000;transform:scaleX(0.87);transform-origin:0 0;">YZ</div>
<div style="position:absolute;left:765px;top:685px;width:1px;height:1px;background:#888;"></div>
<div style="position:absolute;left:767px;top:685px;width:1px;height:1px;background:#888;"></div>
<div style="position:absolute;left:769px;top:685px;width:1px;height:1px;background:#888;"></div>
<div style="position:absolute;left:771px;top:685px;width:1px;height:1px;background:#888;"></div>
<div style="position:absolute;left:773px;top:685px;width:1px;height:1px;background:#888;"></div>
<svg style="position:absolute;left:776px;top:677px;" width="12" height="15" viewBox="0 0 12 15" shape-rendering="crispEdges"><path d="M0.5 0.5 H8.5 L11.5 3.5 V14.5 H0.5Z" fill="#fff" stroke="#222"/><path d="M8.5 0.5 V3.5 H11.5" fill="#fff" stroke="#222"/><path d="M2 4.5H7M2 6.5H9M2 8.5H9M2 10.5H9M2 12.5H9" stroke="#9a9a9a"/><rect x="11" y="14" width="1" height="1" fill="#000"/></svg>
<div class="t" style="left:795.00px;top:678px;font-size:12px;line-height:12px;color:#000;transform:scaleX(0.87);transform-origin:0 0;">AREA_PROJECTION_XY_NET</div>
<div class="t" style="left:942.91px;top:678px;font-size:12px;line-height:12px;color:#000;transform:scaleX(0.99);transform-origin:0 0;">  -  Площадь «тени» детали на ее локальной плоскости </div>
<div class="t" style="left:1252.81px;top:678px;font-size:12px;line-height:12px;color:#000;transform:scaleX(0.87);transform-origin:0 0;">XY</div>
<div style="position:absolute;left:765px;top:703px;width:1px;height:1px;background:#888;"></div>
<div style="position:absolute;left:767px;top:703px;width:1px;height:1px;background:#888;"></div>
<div style="position:absolute;left:769px;top:703px;width:1px;height:1px;background:#888;"></div>
<div style="position:absolute;left:771px;top:703px;width:1px;height:1px;background:#888;"></div>
<div style="position:absolute;left:773px;top:703px;width:1px;height:1px;background:#888;"></div>
<svg style="position:absolute;left:776px;top:695px;" width="12" height="15" viewBox="0 0 12 15" shape-rendering="crispEdges"><path d="M0.5 0.5 H8.5 L11.5 3.5 V14.5 H0.5Z" fill="#fff" stroke="#222"/><path d="M8.5 0.5 V3.5 H11.5" fill="#fff" stroke="#222"/><path d="M2 4.5H7M2 6.5H9M2 8.5H9M2 10.5H9M2 12.5H9" stroke="#9a9a9a"/><rect x="11" y="14" width="1" height="1" fill="#000"/></svg>
<div class="t" style="left:795.00px;top:696px;font-size:12px;line-height:12px;color:#000;transform:scaleX(0.87);transform-origin:0 0;">AREA_PROJECTION_XZ_NET</div>
<div class="t" style="left:942.33px;top:696px;font-size:12px;line-height:12px;color:#000;transform:scaleX(0.99);transform-origin:0 0;">  -  Площадь «тени» детали на ее локальной плоскости </div>
<div class="t" style="left:1252.23px;top:696px;font-size:12px;line-height:12px;color:#000;transform:scaleX(0.87);transform-origin:0 0;">XZ</div>
<div style="position:absolute;left:765px;top:721px;width:1px;height:1px;background:#888;"></div>
<div style="position:absolute;left:767px;top:721px;width:1px;height:1px;background:#888;"></div>
<div style="position:absolute;left:769px;top:721px;width:1px;height:1px;background:#888;"></div>
<div style="position:absolute;left:771px;top:721px;width:1px;height:1px;background:#888;"></div>
<div style="position:absolute;left:773px;top:721px;width:1px;height:1px;background:#888;"></div>
<svg style="position:absolute;left:776px;top:713px;" width="12" height="15" viewBox="0 0 12 15" shape-rendering="crispEdges"><path d="M0.5 0.5 H8.5 L11.5 3.5 V14.5 H0.5Z" fill="#fff" stroke="#222"/><path d="M8.5 0.5 V3.5 H11.5" fill="#fff" stroke="#222"/><path d="M2 4.5H7M2 6.5H9M2 8.5H9M2 10.5H9M2 12.5H9" stroke="#9a9a9a"/><rect x="11" y="14" width="1" height="1" fill="#000"/></svg>
<div class="t" style="left:795.00px;top:714px;font-size:12px;line-height:12px;color:#000;transform:scaleX(0.87);transform-origin:0 0;">AREA_PROJECTION_YZ_NET</div>
<div class="t" style="left:942.33px;top:714px;font-size:12px;line-height:12px;color:#000;transform:scaleX(0.99);transform-origin:0 0;">  -  Площадь «тени» детали на ее локальной плоскости </div>
<div class="t" style="left:1252.23px;top:714px;font-size:12px;line-height:12px;color:#000;transform:scaleX(0.87);transform-origin:0 0;">YZ</div>
<div style="position:absolute;left:765px;top:739px;width:1px;height:1px;background:#888;"></div>
<div style="position:absolute;left:767px;top:739px;width:1px;height:1px;background:#888;"></div>
<div style="position:absolute;left:769px;top:739px;width:1px;height:1px;background:#888;"></div>
<div style="position:absolute;left:771px;top:739px;width:1px;height:1px;background:#888;"></div>
<div style="position:absolute;left:773px;top:739px;width:1px;height:1px;background:#888;"></div>
<svg style="position:absolute;left:776px;top:731px;" width="12" height="15" viewBox="0 0 12 15" shape-rendering="crispEdges"><path d="M0.5 0.5 H8.5 L11.5 3.5 V14.5 H0.5Z" fill="#fff" stroke="#222"/><path d="M8.5 0.5 V3.5 H11.5" fill="#fff" stroke="#222"/><path d="M2 4.5H7M2 6.5H9M2 8.5H9M2 10.5H9M2 12.5H9" stroke="#9a9a9a"/><rect x="11" y="14" width="1" height="1" fill="#000"/></svg>
<div class="t" style="left:795.00px;top:732px;font-size:12px;line-height:12px;color:#000;transform:scaleX(0.87);transform-origin:0 0;">AREA_PROJECTION_XY_GROSS</div>
<div class="t" style="left:959.73px;top:732px;font-size:12px;line-height:12px;color:#000;transform:scaleX(0.99);transform-origin:0 0;">  -  Площадь «тени» детали на ее локальной плоскости </div>
<div class="t" style="left:1269.63px;top:732px;font-size:12px;line-height:12px;color:#000;transform:scaleX(0.87);transform-origin:0 0;">XY</div>
<div style="position:absolute;left:765px;top:757px;width:1px;height:1px;background:#888;"></div>
<div style="position:absolute;left:767px;top:757px;width:1px;height:1px;background:#888;"></div>
<div style="position:absolute;left:769px;top:757px;width:1px;height:1px;background:#888;"></div>
<div style="position:absolute;left:771px;top:757px;width:1px;height:1px;background:#888;"></div>
<div style="position:absolute;left:773px;top:757px;width:1px;height:1px;background:#888;"></div>
<svg style="position:absolute;left:776px;top:749px;" width="12" height="15" viewBox="0 0 12 15" shape-rendering="crispEdges"><path d="M0.5 0.5 H8.5 L11.5 3.5 V14.5 H0.5Z" fill="#fff" stroke="#222"/><path d="M8.5 0.5 V3.5 H11.5" fill="#fff" stroke="#222"/><path d="M2 4.5H7M2 6.5H9M2 8.5H9M2 10.5H9M2 12.5H9" stroke="#9a9a9a"/><rect x="11" y="14" width="1" height="1" fill="#000"/></svg>
<div class="t" style="left:795.00px;top:750px;font-size:12px;line-height:12px;color:#000;transform:scaleX(0.87);transform-origin:0 0;">AREA_PROJECTION_XZ_GROSS</div>
<div class="t" style="left:959.14px;top:750px;font-size:12px;line-height:12px;color:#000;transform:scaleX(0.99);transform-origin:0 0;">  -  Площадь «тени» детали на ее локальной плоскости </div>
<div class="t" style="left:1269.05px;top:750px;font-size:12px;line-height:12px;color:#000;transform:scaleX(0.87);transform-origin:0 0;">XZ</div>
</body></html>
